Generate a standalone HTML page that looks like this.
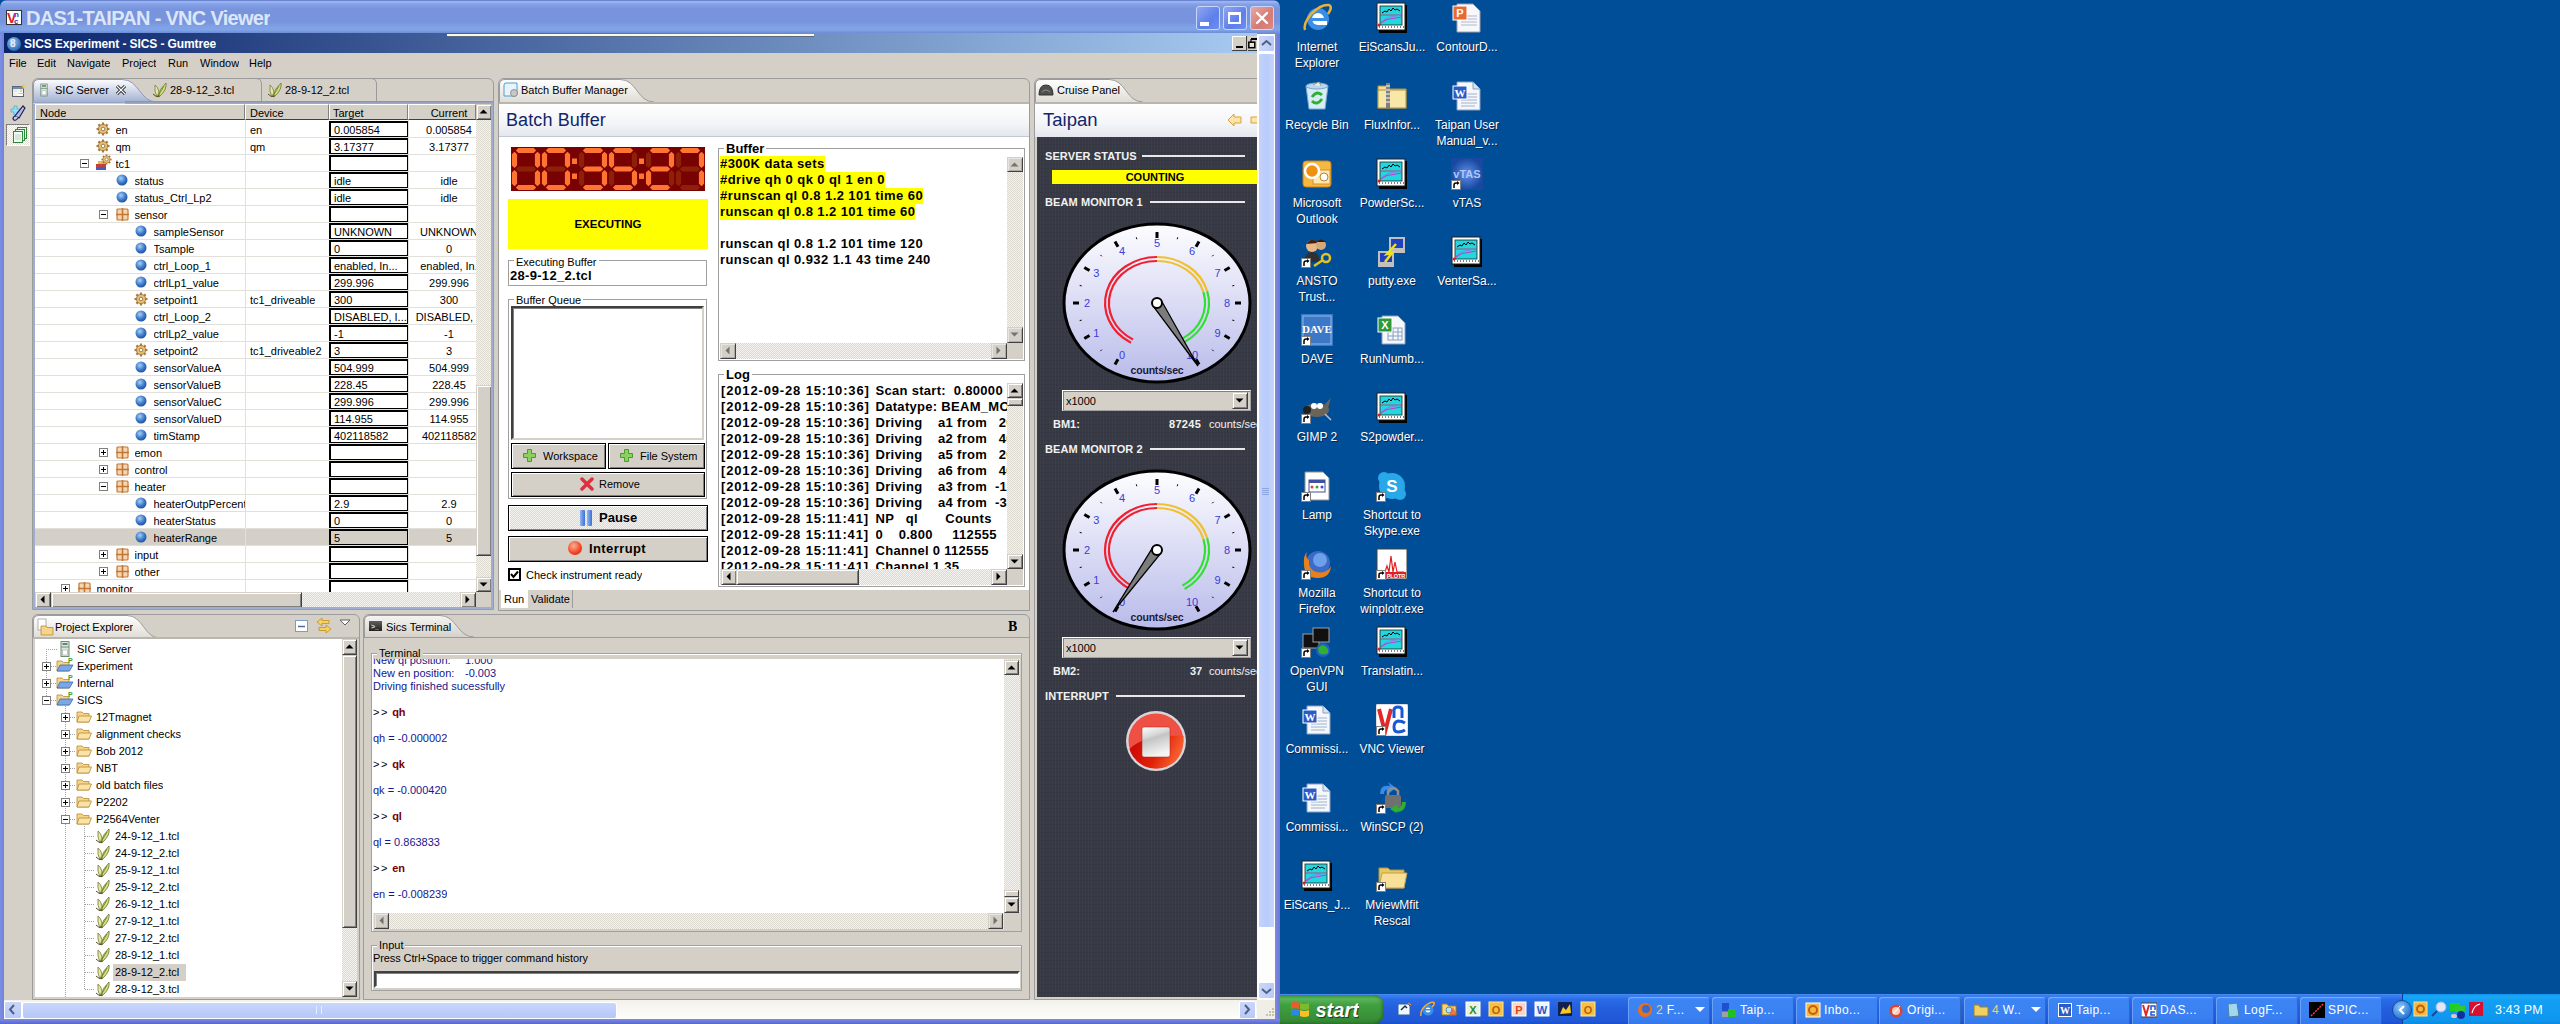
<!DOCTYPE html><html><head><meta charset="utf-8"><style>
html,body{margin:0;padding:0;width:2560px;height:1024px;overflow:hidden;background:#004E98;font-family:"Liberation Sans",sans-serif;}
div{position:absolute;box-sizing:border-box;white-space:nowrap;overflow:hidden;}
svg{position:absolute;overflow:hidden}
</style></head><body>
<div style="left:0px;top:0px;width:1280px;height:34px;background:linear-gradient(#6A86D0 0px,#6A86D0 1px,#9AB4F4 1px,#9AB4F4 2px,#86A2E6 4px,#7894DC 9px,#7894DC 22px,#80A2E6 27px,#80A4E8 30px,#6E8CD8 33px);border-radius:7px 7px 0 0;"></div>
<div style="left:0px;top:34px;width:4px;height:990px;background:linear-gradient(90deg,#7C8FE3,#6F83DA);"></div>
<div style="left:1275px;top:34px;width:5px;height:990px;background:linear-gradient(90deg,#7F8AE2,#6A79D6);"></div>
<div style="left:0px;top:1019px;width:1280px;height:5px;background:linear-gradient(#7E8BE6,#5567CF);"></div>
<div style="left:6px;top:10px;width:16px;height:15px;background:#fff;border:1px solid #333;"></div>
<div style="left:7px;top:10.5px;height:15px;line-height:15px;font-size:14px;font-weight:bold;color:#E02020;letter-spacing:-1px;">V</div>
<div style="left:14px;top:9.5px;height:9px;line-height:9px;font-size:8px;font-weight:bold;color:#2040C0;">n</div>
<div style="left:14px;top:16.5px;height:9px;line-height:9px;font-size:8px;font-weight:bold;color:#2040C0;">c</div>
<div style="left:26px;top:5.0px;height:26px;line-height:26px;font-size:20px;font-weight:bold;color:#DCE6FA;letter-spacing:-0.7px;">DAS1-TAIPAN - VNC Viewer</div>
<div style="left:1196px;top:6px;width:24px;height:24px;background:linear-gradient(135deg,#8FA6F2,#5C7FEA 60%,#6E8EF0);border:1px solid #C9D6FA;border-radius:3px;"></div>
<div style="left:1223px;top:6px;width:24px;height:24px;background:linear-gradient(135deg,#8FA6F2,#5C7FEA 60%,#6E8EF0);border:1px solid #C9D6FA;border-radius:3px;"></div>
<div style="left:1250px;top:6px;width:24px;height:24px;background:linear-gradient(135deg,#E9A7A0,#D57A74 60%,#DC8A82);border:1px solid #C9D6FA;border-radius:3px;"></div>
<div style="left:1200px;top:22px;width:9px;height:4px;background:#fff;"></div>
<div style="left:1228px;top:12px;width:13px;height:12px;border:2px solid #fff;border-top-width:3px;"></div>
<svg style="position:absolute;left:1254px;top:10px;" width="16" height="16" viewBox="0 0 16 16"><path d="M3 3L13 13M13 3L3 13" stroke="#fff" stroke-width="2.4" stroke-linecap="round"/></svg>
<div style="left:4px;top:33px;width:1253px;height:20px;background:linear-gradient(90deg,#0A246A 0%,#A6CAF0 100%);"></div>
<div style="left:447px;top:34px;width:367px;height:3px;background:#FAF8E8;border-bottom:1px solid #5A6A80;"></div>
<div style="left:7px;top:37px;width:14px;height:14px;background:radial-gradient(circle at 40% 35%,#9FC4EC,#2D6CB5 70%,#1D4E8C);border-radius:50%;"></div>
<div style="left:10px;top:38.0px;height:12px;line-height:12px;font-size:10px;font-weight:bold;color:#E8F0FF;">8</div>
<div style="left:24px;top:36.5px;height:15px;line-height:15px;font-size:12px;font-weight:bold;color:#fff;letter-spacing:-0.1px;">SICS Experiment - SICS - Gumtree</div>
<div style="left:1232px;top:36px;width:15px;height:15px;background:#D4D0C8;border-right:1px solid #404040;border-bottom:1px solid #404040;box-shadow:inset 1px 1px #fff;"></div>
<div style="left:1236px;top:46px;width:7px;height:2px;background:#000;"></div>
<div style="left:1248px;top:36px;width:9px;height:15px;background:#D4D0C8;border-bottom:1px solid #404040;"></div>
<svg style="position:absolute;left:1248px;top:38px;" width="9" height="12" viewBox="0 0 9 12"><path d="M3 0.5H9M3 1.5H9M3 1V4" stroke="#000" stroke-width="1.2" fill="none"/><rect x="0.8" y="4.2" width="6" height="5.5" fill="#E8E4D8" stroke="#000" stroke-width="1.5"/></svg>
<div style="left:4px;top:53px;width:1253px;height:966px;background:#D4D0C8;"></div>
<div style="left:9px;top:56.0px;height:14px;line-height:14px;font-size:11px;font-weight:normal;color:#000;">File</div>
<div style="left:37px;top:56.0px;height:14px;line-height:14px;font-size:11px;font-weight:normal;color:#000;">Edit</div>
<div style="left:67px;top:56.0px;height:14px;line-height:14px;font-size:11px;font-weight:normal;color:#000;">Navigate</div>
<div style="left:122px;top:56.0px;height:14px;line-height:14px;font-size:11px;font-weight:normal;color:#000;">Project</div>
<div style="left:168px;top:56.0px;height:14px;line-height:14px;font-size:11px;font-weight:normal;color:#000;">Run</div>
<div style="left:200px;top:56.0px;height:14px;line-height:14px;font-size:11px;font-weight:normal;color:#000;">Window</div>
<div style="left:249px;top:56.0px;height:14px;line-height:14px;font-size:11px;font-weight:normal;color:#000;">Help</div>
<svg style="position:absolute;left:11px;top:83px;" width="16" height="16" viewBox="0 0 16 16"><rect x="1.5" y="3.5" width="11" height="10" fill="#fff" stroke="#5A6470"/><rect x="2" y="4" width="10" height="2" fill="#7C8CA8"/><rect x="2" y="6" width="4.5" height="3.5" fill="#D8ECF8"/><rect x="7" y="6" width="5" height="3.5" fill="#E8F4FC"/><rect x="2" y="10" width="4.5" height="3" fill="#FCF0C8"/><rect x="7" y="10" width="5" height="3" fill="#fff"/><path d="M10 6V9M7.5 10.5H12.5M12.5 0.5V5.5M10 3H15" stroke="#F0D020" stroke-width="1.2"/></svg>
<svg style="position:absolute;left:9px;top:104px;" width="18" height="18" viewBox="0 0 18 18"><path d="M2 5H5V2H8V5H11V8H8V11H5V8H2Z" fill="#90E0F0" stroke="#40A0C8" stroke-width="0.6"/><path d="M16 4 L10 14 L6 12 L14 2Z" fill="#B8B8F0" stroke="#202050" stroke-width="1.2"/><path d="M9 14 Q6 18 4 15 Q4 12 7 12" fill="#C8C8F8" stroke="#202050" stroke-width="1.2"/></svg>
<div style="left:6px;top:124px;width:24px;height:22px;background:repeating-conic-gradient(#FFFFFF 0% 25%, #E4E1DA 0% 50%) 0 0/2px 2px;border:1px solid;border-color:#808080 #fff #fff #808080;"></div>
<svg style="position:absolute;left:12px;top:127px;" width="15" height="17" viewBox="0 0 15 17"><rect x="5.5" y="0.5" width="9" height="11" fill="#E8F8E8" stroke="#2E8A3A"/><rect x="3.5" y="2.5" width="9" height="11" fill="#EAF8EA" stroke="#2E8A3A"/><rect x="1.5" y="4.5" width="9" height="11" fill="#F2FCF2" stroke="#2E8A3A"/><path d="M3 8H9M3 10H9M3 12H9" stroke="#90B8A0" stroke-width="0.6"/></svg>
<svg width="0" height="0" style="position:absolute"><defs>
<symbol id="gear" viewBox="0 0 14 14"><g fill="#D9A860" stroke="#8C6A3A" stroke-width="0.8"><circle cx="7" cy="7" r="4.6"/></g><g stroke="#A87C40" stroke-width="2.2"><line x1="7" y1="0.5" x2="7" y2="13.5"/><line x1="0.5" y1="7" x2="13.5" y2="7"/><line x1="2.4" y1="2.4" x2="11.6" y2="11.6"/><line x1="11.6" y1="2.4" x2="2.4" y2="11.6"/></g><circle cx="7" cy="7" r="4" fill="#E8C070"/><circle cx="7" cy="7" r="1.8" fill="#fff" stroke="#8C6A3A" stroke-width="0.8"/></symbol>
<symbol id="ball" viewBox="0 0 12 12"><defs><radialGradient id="bg1" cx="0.4" cy="0.35" r="0.7"><stop offset="0" stop-color="#A8CFF5"/><stop offset="0.6" stop-color="#3A78C8"/><stop offset="1" stop-color="#1E4C96"/></radialGradient></defs><circle cx="6" cy="6" r="5.5" fill="url(#bg1)"/></symbol>
<symbol id="grid" viewBox="0 0 13 13"><rect x="1" y="1" width="11" height="11" rx="1" fill="#F6D6B0" stroke="#C07838" stroke-width="1.2"/><path d="M6.5 0V13M0 6.5H13" stroke="#C07838" stroke-width="1.6"/></symbol>
<symbol id="plus" viewBox="0 0 9 9"><rect x="0.5" y="0.5" width="8" height="8" fill="#fff" stroke="#808080"/><path d="M2 4.5H7M4.5 2V7" stroke="#000"/></symbol>
<symbol id="minus" viewBox="0 0 9 9"><rect x="0.5" y="0.5" width="8" height="8" fill="#fff" stroke="#808080"/><path d="M2 4.5H7" stroke="#000"/></symbol>
<symbol id="tcl" viewBox="0 0 16 16"><path d="M5 15 Q2 9 3 3 Q6 5 7 10Z" fill="#E8E8A0" stroke="#7A7A40" stroke-width="0.8"/><path d="M6 15 Q7 7 14 1 Q15 7 9 13Z" fill="#D8E080" stroke="#6A7030" stroke-width="0.8"/><path d="M6 14 L12 4" stroke="#6A8C30" stroke-width="1"/><path d="M1 12 Q4 16 8 14" stroke="#505020" stroke-width="1" fill="none"/></symbol>
<symbol id="folder" viewBox="0 0 16 14"><path d="M1 2 H6 L7.5 3.5 H13 V12 H1Z" fill="#F5D58A" stroke="#B88A30" stroke-width="0.8"/><path d="M1 12 L3 6 H15.5 L13 12Z" fill="#FBE3A8" stroke="#B88A30" stroke-width="0.8"/></symbol>
<symbol id="pfolder" viewBox="0 0 18 16"><path d="M1 4 H6 L7.5 5.5 H13 V14 H1Z" fill="#F5D58A" stroke="#B88A30" stroke-width="0.8"/><path d="M1 14 L4 8 H17 L13.5 14Z" fill="#7BA7E6" stroke="#3A6AB0" stroke-width="0.8"/><text x="12" y="6" font-size="7" font-weight="bold" fill="#3AA030" font-family="Liberation Sans">P</text></symbol>
<symbol id="server" viewBox="0 0 10 16"><rect x="1" y="0.5" width="8" height="15" fill="#DDE6DD" stroke="#6C8C7C"/><rect x="2.5" y="2" width="5" height="2" fill="#5C8C6C"/><line x1="1" y1="6" x2="9" y2="6" stroke="#6C8C7C"/><rect x="2.5" y="9" width="5" height="5" fill="#fff" stroke="#9CA8A0" stroke-width="0.6"/></symbol>
<symbol id="sarrowU" viewBox="0 0 15 15"><path d="M3.5 9.5 L7.5 5.5 L11.5 9.5Z" fill="#000"/></symbol>
<symbol id="sarrowD" viewBox="0 0 15 15"><path d="M3.5 5.5 L7.5 9.5 L11.5 5.5Z" fill="#000"/></symbol>
<symbol id="sarrowL" viewBox="0 0 15 15"><path d="M9.5 3.5 L5.5 7.5 L9.5 11.5Z" fill="#000"/></symbol>
<symbol id="sarrowR" viewBox="0 0 15 15"><path d="M5.5 3.5 L9.5 7.5 L5.5 11.5Z" fill="#000"/></symbol>
</defs></svg>
<div style="left:32px;top:78px;width:462px;height:532px;border:1px solid #9C9C9C;border-radius:6px 6px 0 0;background:#D4D0C8;"></div>
<svg style="position:absolute;left:33px;top:79px" width="126" height="24"><defs><linearGradient id="atab" x1="0" y1="0" x2="0" y2="1"><stop offset="0" stop-color="#FDFDFE"/><stop offset="1" stop-color="#9EAED0"/></linearGradient></defs><path d="M0.5 24 V6 Q0.5 0.5 6 0.5 H89 C106.5 0.5 106.5 23 124 23 V24Z" fill="url(#atab)" stroke="#8E99B8" stroke-width="1"/></svg>
<svg style="position:absolute;left:40px;top:82px" width="8" height="16"><use href="#server" width="8" height="16"/></svg>
<div style="left:55px;top:83.0px;height:14px;line-height:14px;font-size:11px;font-weight:normal;color:#000;">SIC Server</div>
<svg style="position:absolute;left:115px;top:84px;" width="12" height="12" viewBox="0 0 12 12"><path d="M2 2L10 10M10 2L2 10" stroke="#000" stroke-width="3"/><path d="M2 2L10 10M10 2L2 10" stroke="#fff" stroke-width="1.4"/></svg>
<svg style="position:absolute;left:152px;top:82px" width="16" height="16"><use href="#tcl" width="16" height="16"/></svg>
<div style="left:170px;top:83.0px;height:14px;line-height:14px;font-size:11px;font-weight:normal;color:#000;">28-9-12_3.tcl</div>
<svg style="position:absolute;left:250px;top:78px;" width="13" height="24" viewBox="0 0 13 24"><path d="M0 0.5 H6 Q11.5 0.5 11.5 6 V24" stroke="#9A9A9A" fill="none"/></svg>
<svg style="position:absolute;left:267px;top:82px" width="16" height="16"><use href="#tcl" width="16" height="16"/></svg>
<div style="left:285px;top:83.0px;height:14px;line-height:14px;font-size:11px;font-weight:normal;color:#000;">28-9-12_2.tcl</div>
<svg style="position:absolute;left:365px;top:78px;" width="13" height="24" viewBox="0 0 13 24"><path d="M0 0.5 H6 Q11.5 0.5 11.5 6 V24" stroke="#9A9A9A" fill="none"/></svg>
<div style="left:125px;top:101px;width:368px;height:3px;background:linear-gradient(#8890A8,#A4B0CC);"></div>
<div style="left:35px;top:120px;width:441px;height:472px;background:#fff;"></div>
<div style="left:35px;top:104px;width:210px;height:16px;background:#D4D0C8;border:1px solid;border-color:#fff #808080 #404040 #fff;"></div>
<div style="left:245px;top:104px;width:84px;height:16px;background:#D4D0C8;border:1px solid;border-color:#fff #808080 #404040 #fff;"></div>
<div style="left:329px;top:104px;width:79px;height:16px;background:#D4D0C8;border:1px solid;border-color:#fff #808080 #404040 #fff;"></div>
<div style="left:408px;top:104px;width:68px;height:16px;background:#D4D0C8;border:1px solid;border-color:#fff #808080 #404040 #fff;"></div>
<div style="left:40px;top:106.0px;height:14px;line-height:14px;font-size:11px;font-weight:normal;color:#000;">Node</div>
<div style="left:250px;top:106.0px;height:14px;line-height:14px;font-size:11px;font-weight:normal;color:#000;">Device</div>
<div style="left:333px;top:106.0px;height:14px;line-height:14px;font-size:11px;font-weight:normal;color:#000;">Target</div>
<div style="left:409.0px;top:106.0px;width:80px;height:14px;line-height:14px;font-size:11px;font-weight:normal;color:#000;text-align:center;">Current</div>
<div style="left:35px;top:120px;width:441px;height:472px;">
<div style="left:0px;top:17px;width:441px;height:1px;background:#E2E0DA;"></div>
<svg style="position:absolute;left:61px;top:2px" width="14" height="14"><use href="#gear" width="14" height="14"/></svg>
<div style="left:80.5px;top:2px;width:129.5px;height:16px;line-height:16px;font-size:11px;">en</div>
<div style="left:215px;top:2px;height:16px;line-height:16px;font-size:11px;">en</div>
<div style="left:294px;top:1px;width:79px;height:16px;border:2px solid #000;border-right-width:1px;border-bottom-width:1px;background:#fff;line-height:13px;font-size:11px;padding-left:3px;padding-top:1px;">0.005854</div>
<div style="left:373px;top:2px;width:82px;height:16px;line-height:16px;font-size:11px;text-align:center;">0.005854</div>
<div style="left:0px;top:34px;width:441px;height:1px;background:#E2E0DA;"></div>
<svg style="position:absolute;left:61px;top:19px" width="14" height="14"><use href="#gear" width="14" height="14"/></svg>
<div style="left:80.5px;top:19px;width:129.5px;height:16px;line-height:16px;font-size:11px;">qm</div>
<div style="left:215px;top:19px;height:16px;line-height:16px;font-size:11px;">qm</div>
<div style="left:294px;top:18px;width:79px;height:16px;border:2px solid #000;border-right-width:1px;border-bottom-width:1px;background:#fff;line-height:13px;font-size:11px;padding-left:3px;padding-top:1px;">3.17377</div>
<div style="left:373px;top:19px;width:82px;height:16px;line-height:16px;font-size:11px;text-align:center;">3.17377</div>
<div style="left:0px;top:51px;width:441px;height:1px;background:#E2E0DA;"></div>
<svg style="position:absolute;left:45.0px;top:38.5px" width="9" height="9"><use href="#minus" width="9" height="9"/></svg>
<svg style="position:absolute;left:60px;top:35px;" width="16" height="16" viewBox="0 0 16 16"><rect x="1" y="9" width="10" height="3" fill="#C04040"/><rect x="1" y="12" width="10" height="3" fill="#4060C0"/><rect x="3" y="6" width="8" height="3" fill="#E0C040"/></svg>
<svg style="position:absolute;left:66px;top:34px" width="11" height="11"><use href="#gear" width="11" height="11"/></svg>
<div style="left:80.5px;top:36px;width:129.5px;height:16px;line-height:16px;font-size:11px;">tc1</div>
<div style="left:294px;top:35px;width:79px;height:16px;border:2px solid #000;border-right-width:1px;border-bottom-width:1px;background:#fff;line-height:13px;font-size:11px;padding-left:3px;padding-top:1px;"></div>
<div style="left:0px;top:68px;width:441px;height:1px;background:#E2E0DA;"></div>
<svg style="position:absolute;left:81px;top:54px" width="12" height="12"><use href="#ball" width="12" height="12"/></svg>
<div style="left:99.5px;top:53px;width:110.5px;height:16px;line-height:16px;font-size:11px;">status</div>
<div style="left:294px;top:52px;width:79px;height:16px;border:2px solid #000;border-right-width:1px;border-bottom-width:1px;background:#fff;line-height:13px;font-size:11px;padding-left:3px;padding-top:1px;">idle</div>
<div style="left:373px;top:53px;width:82px;height:16px;line-height:16px;font-size:11px;text-align:center;">idle</div>
<div style="left:0px;top:85px;width:441px;height:1px;background:#E2E0DA;"></div>
<svg style="position:absolute;left:81px;top:71px" width="12" height="12"><use href="#ball" width="12" height="12"/></svg>
<div style="left:99.5px;top:70px;width:110.5px;height:16px;line-height:16px;font-size:11px;">status_Ctrl_Lp2</div>
<div style="left:294px;top:69px;width:79px;height:16px;border:2px solid #000;border-right-width:1px;border-bottom-width:1px;background:#fff;line-height:13px;font-size:11px;padding-left:3px;padding-top:1px;">idle</div>
<div style="left:373px;top:70px;width:82px;height:16px;line-height:16px;font-size:11px;text-align:center;">idle</div>
<div style="left:0px;top:102px;width:441px;height:1px;background:#E2E0DA;"></div>
<svg style="position:absolute;left:64.0px;top:89.5px" width="9" height="9"><use href="#minus" width="9" height="9"/></svg>
<svg style="position:absolute;left:81px;top:87.5px" width="13" height="13"><use href="#grid" width="13" height="13"/></svg>
<div style="left:99.5px;top:87px;width:110.5px;height:16px;line-height:16px;font-size:11px;">sensor</div>
<div style="left:294px;top:86px;width:79px;height:16px;border:2px solid #000;border-right-width:1px;border-bottom-width:1px;background:#fff;line-height:13px;font-size:11px;padding-left:3px;padding-top:1px;"></div>
<div style="left:0px;top:119px;width:441px;height:1px;background:#E2E0DA;"></div>
<svg style="position:absolute;left:100px;top:105px" width="12" height="12"><use href="#ball" width="12" height="12"/></svg>
<div style="left:118.5px;top:104px;width:91.5px;height:16px;line-height:16px;font-size:11px;">sampleSensor</div>
<div style="left:294px;top:103px;width:79px;height:16px;border:2px solid #000;border-right-width:1px;border-bottom-width:1px;background:#fff;line-height:13px;font-size:11px;padding-left:3px;padding-top:1px;">UNKNOWN</div>
<div style="left:373px;top:104px;width:82px;height:16px;line-height:16px;font-size:11px;text-align:center;">UNKNOWN</div>
<div style="left:0px;top:136px;width:441px;height:1px;background:#E2E0DA;"></div>
<svg style="position:absolute;left:100px;top:122px" width="12" height="12"><use href="#ball" width="12" height="12"/></svg>
<div style="left:118.5px;top:121px;width:91.5px;height:16px;line-height:16px;font-size:11px;">Tsample</div>
<div style="left:294px;top:120px;width:79px;height:16px;border:2px solid #000;border-right-width:1px;border-bottom-width:1px;background:#fff;line-height:13px;font-size:11px;padding-left:3px;padding-top:1px;">0</div>
<div style="left:373px;top:121px;width:82px;height:16px;line-height:16px;font-size:11px;text-align:center;">0</div>
<div style="left:0px;top:153px;width:441px;height:1px;background:#E2E0DA;"></div>
<svg style="position:absolute;left:100px;top:139px" width="12" height="12"><use href="#ball" width="12" height="12"/></svg>
<div style="left:118.5px;top:138px;width:91.5px;height:16px;line-height:16px;font-size:11px;">ctrl_Loop_1</div>
<div style="left:294px;top:137px;width:79px;height:16px;border:2px solid #000;border-right-width:1px;border-bottom-width:1px;background:#fff;line-height:13px;font-size:11px;padding-left:3px;padding-top:1px;">enabled, In...</div>
<div style="left:373px;top:138px;width:82px;height:16px;line-height:16px;font-size:11px;text-align:center;">enabled, In.</div>
<div style="left:0px;top:170px;width:441px;height:1px;background:#E2E0DA;"></div>
<svg style="position:absolute;left:100px;top:156px" width="12" height="12"><use href="#ball" width="12" height="12"/></svg>
<div style="left:118.5px;top:155px;width:91.5px;height:16px;line-height:16px;font-size:11px;">ctrlLp1_value</div>
<div style="left:294px;top:154px;width:79px;height:16px;border:2px solid #000;border-right-width:1px;border-bottom-width:1px;background:#fff;line-height:13px;font-size:11px;padding-left:3px;padding-top:1px;">299.996</div>
<div style="left:373px;top:155px;width:82px;height:16px;line-height:16px;font-size:11px;text-align:center;">299.996</div>
<div style="left:0px;top:187px;width:441px;height:1px;background:#E2E0DA;"></div>
<svg style="position:absolute;left:99px;top:172px" width="14" height="14"><use href="#gear" width="14" height="14"/></svg>
<div style="left:118.5px;top:172px;width:91.5px;height:16px;line-height:16px;font-size:11px;">setpoint1</div>
<div style="left:215px;top:172px;height:16px;line-height:16px;font-size:11px;">tc1_driveable</div>
<div style="left:294px;top:171px;width:79px;height:16px;border:2px solid #000;border-right-width:1px;border-bottom-width:1px;background:#fff;line-height:13px;font-size:11px;padding-left:3px;padding-top:1px;">300</div>
<div style="left:373px;top:172px;width:82px;height:16px;line-height:16px;font-size:11px;text-align:center;">300</div>
<div style="left:0px;top:204px;width:441px;height:1px;background:#E2E0DA;"></div>
<svg style="position:absolute;left:100px;top:190px" width="12" height="12"><use href="#ball" width="12" height="12"/></svg>
<div style="left:118.5px;top:189px;width:91.5px;height:16px;line-height:16px;font-size:11px;">ctrl_Loop_2</div>
<div style="left:294px;top:188px;width:79px;height:16px;border:2px solid #000;border-right-width:1px;border-bottom-width:1px;background:#fff;line-height:13px;font-size:11px;padding-left:3px;padding-top:1px;">DISABLED, I...</div>
<div style="left:373px;top:189px;width:82px;height:16px;line-height:16px;font-size:11px;text-align:center;">DISABLED, I.</div>
<div style="left:0px;top:221px;width:441px;height:1px;background:#E2E0DA;"></div>
<svg style="position:absolute;left:100px;top:207px" width="12" height="12"><use href="#ball" width="12" height="12"/></svg>
<div style="left:118.5px;top:206px;width:91.5px;height:16px;line-height:16px;font-size:11px;">ctrlLp2_value</div>
<div style="left:294px;top:205px;width:79px;height:16px;border:2px solid #000;border-right-width:1px;border-bottom-width:1px;background:#fff;line-height:13px;font-size:11px;padding-left:3px;padding-top:1px;">-1</div>
<div style="left:373px;top:206px;width:82px;height:16px;line-height:16px;font-size:11px;text-align:center;">-1</div>
<div style="left:0px;top:238px;width:441px;height:1px;background:#E2E0DA;"></div>
<svg style="position:absolute;left:99px;top:223px" width="14" height="14"><use href="#gear" width="14" height="14"/></svg>
<div style="left:118.5px;top:223px;width:91.5px;height:16px;line-height:16px;font-size:11px;">setpoint2</div>
<div style="left:215px;top:223px;height:16px;line-height:16px;font-size:11px;">tc1_driveable2</div>
<div style="left:294px;top:222px;width:79px;height:16px;border:2px solid #000;border-right-width:1px;border-bottom-width:1px;background:#fff;line-height:13px;font-size:11px;padding-left:3px;padding-top:1px;">3</div>
<div style="left:373px;top:223px;width:82px;height:16px;line-height:16px;font-size:11px;text-align:center;">3</div>
<div style="left:0px;top:255px;width:441px;height:1px;background:#E2E0DA;"></div>
<svg style="position:absolute;left:100px;top:241px" width="12" height="12"><use href="#ball" width="12" height="12"/></svg>
<div style="left:118.5px;top:240px;width:91.5px;height:16px;line-height:16px;font-size:11px;">sensorValueA</div>
<div style="left:294px;top:239px;width:79px;height:16px;border:2px solid #000;border-right-width:1px;border-bottom-width:1px;background:#fff;line-height:13px;font-size:11px;padding-left:3px;padding-top:1px;">504.999</div>
<div style="left:373px;top:240px;width:82px;height:16px;line-height:16px;font-size:11px;text-align:center;">504.999</div>
<div style="left:0px;top:272px;width:441px;height:1px;background:#E2E0DA;"></div>
<svg style="position:absolute;left:100px;top:258px" width="12" height="12"><use href="#ball" width="12" height="12"/></svg>
<div style="left:118.5px;top:257px;width:91.5px;height:16px;line-height:16px;font-size:11px;">sensorValueB</div>
<div style="left:294px;top:256px;width:79px;height:16px;border:2px solid #000;border-right-width:1px;border-bottom-width:1px;background:#fff;line-height:13px;font-size:11px;padding-left:3px;padding-top:1px;">228.45</div>
<div style="left:373px;top:257px;width:82px;height:16px;line-height:16px;font-size:11px;text-align:center;">228.45</div>
<div style="left:0px;top:289px;width:441px;height:1px;background:#E2E0DA;"></div>
<svg style="position:absolute;left:100px;top:275px" width="12" height="12"><use href="#ball" width="12" height="12"/></svg>
<div style="left:118.5px;top:274px;width:91.5px;height:16px;line-height:16px;font-size:11px;">sensorValueC</div>
<div style="left:294px;top:273px;width:79px;height:16px;border:2px solid #000;border-right-width:1px;border-bottom-width:1px;background:#fff;line-height:13px;font-size:11px;padding-left:3px;padding-top:1px;">299.996</div>
<div style="left:373px;top:274px;width:82px;height:16px;line-height:16px;font-size:11px;text-align:center;">299.996</div>
<div style="left:0px;top:306px;width:441px;height:1px;background:#E2E0DA;"></div>
<svg style="position:absolute;left:100px;top:292px" width="12" height="12"><use href="#ball" width="12" height="12"/></svg>
<div style="left:118.5px;top:291px;width:91.5px;height:16px;line-height:16px;font-size:11px;">sensorValueD</div>
<div style="left:294px;top:290px;width:79px;height:16px;border:2px solid #000;border-right-width:1px;border-bottom-width:1px;background:#fff;line-height:13px;font-size:11px;padding-left:3px;padding-top:1px;">114.955</div>
<div style="left:373px;top:291px;width:82px;height:16px;line-height:16px;font-size:11px;text-align:center;">114.955</div>
<div style="left:0px;top:323px;width:441px;height:1px;background:#E2E0DA;"></div>
<svg style="position:absolute;left:100px;top:309px" width="12" height="12"><use href="#ball" width="12" height="12"/></svg>
<div style="left:118.5px;top:308px;width:91.5px;height:16px;line-height:16px;font-size:11px;">timStamp</div>
<div style="left:294px;top:307px;width:79px;height:16px;border:2px solid #000;border-right-width:1px;border-bottom-width:1px;background:#fff;line-height:13px;font-size:11px;padding-left:3px;padding-top:1px;">402118582</div>
<div style="left:373px;top:308px;width:82px;height:16px;line-height:16px;font-size:11px;text-align:center;">402118582</div>
<div style="left:0px;top:340px;width:441px;height:1px;background:#E2E0DA;"></div>
<svg style="position:absolute;left:64.0px;top:327.5px" width="9" height="9"><use href="#plus" width="9" height="9"/></svg>
<svg style="position:absolute;left:81px;top:325.5px" width="13" height="13"><use href="#grid" width="13" height="13"/></svg>
<div style="left:99.5px;top:325px;width:110.5px;height:16px;line-height:16px;font-size:11px;">emon</div>
<div style="left:294px;top:324px;width:79px;height:16px;border:2px solid #000;border-right-width:1px;border-bottom-width:1px;background:#fff;line-height:13px;font-size:11px;padding-left:3px;padding-top:1px;"></div>
<div style="left:0px;top:357px;width:441px;height:1px;background:#E2E0DA;"></div>
<svg style="position:absolute;left:64.0px;top:344.5px" width="9" height="9"><use href="#plus" width="9" height="9"/></svg>
<svg style="position:absolute;left:81px;top:342.5px" width="13" height="13"><use href="#grid" width="13" height="13"/></svg>
<div style="left:99.5px;top:342px;width:110.5px;height:16px;line-height:16px;font-size:11px;">control</div>
<div style="left:294px;top:341px;width:79px;height:16px;border:2px solid #000;border-right-width:1px;border-bottom-width:1px;background:#fff;line-height:13px;font-size:11px;padding-left:3px;padding-top:1px;"></div>
<div style="left:0px;top:374px;width:441px;height:1px;background:#E2E0DA;"></div>
<svg style="position:absolute;left:64.0px;top:361.5px" width="9" height="9"><use href="#minus" width="9" height="9"/></svg>
<svg style="position:absolute;left:81px;top:359.5px" width="13" height="13"><use href="#grid" width="13" height="13"/></svg>
<div style="left:99.5px;top:359px;width:110.5px;height:16px;line-height:16px;font-size:11px;">heater</div>
<div style="left:294px;top:358px;width:79px;height:16px;border:2px solid #000;border-right-width:1px;border-bottom-width:1px;background:#fff;line-height:13px;font-size:11px;padding-left:3px;padding-top:1px;"></div>
<div style="left:0px;top:391px;width:441px;height:1px;background:#E2E0DA;"></div>
<svg style="position:absolute;left:100px;top:377px" width="12" height="12"><use href="#ball" width="12" height="12"/></svg>
<div style="left:118.5px;top:376px;width:91.5px;height:16px;line-height:16px;font-size:11px;">heaterOutpPercent</div>
<div style="left:294px;top:375px;width:79px;height:16px;border:2px solid #000;border-right-width:1px;border-bottom-width:1px;background:#fff;line-height:13px;font-size:11px;padding-left:3px;padding-top:1px;">2.9</div>
<div style="left:373px;top:376px;width:82px;height:16px;line-height:16px;font-size:11px;text-align:center;">2.9</div>
<div style="left:0px;top:408px;width:441px;height:1px;background:#E2E0DA;"></div>
<svg style="position:absolute;left:100px;top:394px" width="12" height="12"><use href="#ball" width="12" height="12"/></svg>
<div style="left:118.5px;top:393px;width:91.5px;height:16px;line-height:16px;font-size:11px;">heaterStatus</div>
<div style="left:294px;top:392px;width:79px;height:16px;border:2px solid #000;border-right-width:1px;border-bottom-width:1px;background:#fff;line-height:13px;font-size:11px;padding-left:3px;padding-top:1px;">0</div>
<div style="left:373px;top:393px;width:82px;height:16px;line-height:16px;font-size:11px;text-align:center;">0</div>
<div style="left:0px;top:409px;width:441px;height:17px;background:#D4D0C8;"></div>
<div style="left:0px;top:425px;width:441px;height:1px;background:#E2E0DA;"></div>
<svg style="position:absolute;left:100px;top:411px" width="12" height="12"><use href="#ball" width="12" height="12"/></svg>
<div style="left:118.5px;top:410px;width:91.5px;height:16px;line-height:16px;font-size:11px;">heaterRange</div>
<div style="left:294px;top:409px;width:79px;height:16px;border:2px solid #000;border-right-width:1px;border-bottom-width:1px;background:#D4D0C8;line-height:13px;font-size:11px;padding-left:3px;padding-top:1px;">5</div>
<div style="left:373px;top:410px;width:82px;height:16px;line-height:16px;font-size:11px;text-align:center;">5</div>
<div style="left:0px;top:442px;width:441px;height:1px;background:#E2E0DA;"></div>
<svg style="position:absolute;left:64.0px;top:429.5px" width="9" height="9"><use href="#plus" width="9" height="9"/></svg>
<svg style="position:absolute;left:81px;top:427.5px" width="13" height="13"><use href="#grid" width="13" height="13"/></svg>
<div style="left:99.5px;top:427px;width:110.5px;height:16px;line-height:16px;font-size:11px;">input</div>
<div style="left:294px;top:426px;width:79px;height:16px;border:2px solid #000;border-right-width:1px;border-bottom-width:1px;background:#fff;line-height:13px;font-size:11px;padding-left:3px;padding-top:1px;"></div>
<div style="left:0px;top:459px;width:441px;height:1px;background:#E2E0DA;"></div>
<svg style="position:absolute;left:64.0px;top:446.5px" width="9" height="9"><use href="#plus" width="9" height="9"/></svg>
<svg style="position:absolute;left:81px;top:444.5px" width="13" height="13"><use href="#grid" width="13" height="13"/></svg>
<div style="left:99.5px;top:444px;width:110.5px;height:16px;line-height:16px;font-size:11px;">other</div>
<div style="left:294px;top:443px;width:79px;height:16px;border:2px solid #000;border-right-width:1px;border-bottom-width:1px;background:#fff;line-height:13px;font-size:11px;padding-left:3px;padding-top:1px;"></div>
<div style="left:0px;top:476px;width:441px;height:1px;background:#E2E0DA;"></div>
<svg style="position:absolute;left:26.0px;top:463.5px" width="9" height="9"><use href="#plus" width="9" height="9"/></svg>
<svg style="position:absolute;left:43px;top:461.5px" width="13" height="13"><use href="#grid" width="13" height="13"/></svg>
<div style="left:61.5px;top:461px;width:148.5px;height:16px;line-height:16px;font-size:11px;">monitor</div>
<div style="left:294px;top:460px;width:79px;height:16px;border:2px solid #000;border-right-width:1px;border-bottom-width:1px;background:#fff;line-height:13px;font-size:11px;padding-left:3px;padding-top:1px;"></div>
</div>
<div style="left:245px;top:120px;width:1px;height:472px;background:#E2E0DA;"></div>
<div style="left:408px;top:120px;width:1px;height:472px;background:#E2E0DA;"></div>
<div style="left:476px;top:104px;width:16px;height:488px;background:repeating-conic-gradient(#F4F3EF 0% 25%, #DCD9D1 0% 50%) 0 0/2px 2px;"></div>
<div style="left:476px;top:104px;width:16px;height:16px;background:#D4D0C8;border:1px solid;border-color:#D4D0C8 #404040 #404040 #D4D0C8;box-shadow:inset 1px 1px #fff,inset -1px -1px #808080;"></div>
<svg style="position:absolute;left:476px;top:104px" width="15" height="15"><use href="#sarrowU" width="15" height="15"/></svg>
<div style="left:476px;top:385px;width:16px;height:171px;background:#D4D0C8;border:1px solid;border-color:#D4D0C8 #404040 #404040 #D4D0C8;box-shadow:inset 1px 1px #fff,inset -1px -1px #808080;"></div>
<div style="left:476px;top:577px;width:16px;height:15px;background:#D4D0C8;border:1px solid;border-color:#D4D0C8 #404040 #404040 #D4D0C8;box-shadow:inset 1px 1px #fff,inset -1px -1px #808080;"></div>
<svg style="position:absolute;left:476px;top:577px" width="15" height="15"><use href="#sarrowD" width="15" height="15"/></svg>
<div style="left:35px;top:592px;width:441px;height:16px;background:repeating-conic-gradient(#F4F3EF 0% 25%, #DCD9D1 0% 50%) 0 0/2px 2px;"></div>
<div style="left:35px;top:592px;width:16px;height:16px;background:#D4D0C8;border:1px solid;border-color:#D4D0C8 #404040 #404040 #D4D0C8;box-shadow:inset 1px 1px #fff,inset -1px -1px #808080;"></div>
<svg style="position:absolute;left:35px;top:592px" width="15" height="15"><use href="#sarrowL" width="15" height="15"/></svg>
<div style="left:51px;top:592px;width:251px;height:16px;background:#D4D0C8;border:1px solid;border-color:#D4D0C8 #404040 #404040 #D4D0C8;box-shadow:inset 1px 1px #fff,inset -1px -1px #808080;"></div>
<div style="left:460px;top:592px;width:16px;height:16px;background:#D4D0C8;border:1px solid;border-color:#D4D0C8 #404040 #404040 #D4D0C8;box-shadow:inset 1px 1px #fff,inset -1px -1px #808080;"></div>
<svg style="position:absolute;left:460px;top:592px" width="15" height="15"><use href="#sarrowR" width="15" height="15"/></svg>
<div style="left:476px;top:592px;width:16px;height:16px;background:#D4D0C8;"></div>
<div style="left:33px;top:607px;width:460px;height:2px;background:#9EAED0;"></div>
<div style="left:33px;top:104px;width:2px;height:504px;background:#9EAED0;"></div>
<div style="left:491px;top:104px;width:2px;height:504px;background:#9EAED0;"></div>
<div style="left:498px;top:78px;width:532px;height:533px;border:1px solid #9C9C9C;border-radius:6px 6px 0 0;background:#D4D0C8;"></div>
<svg style="position:absolute;left:499px;top:79px" width="157" height="24"><defs><linearGradient id="itab" x1="0" y1="0" x2="0" y2="1"><stop offset="0" stop-color="#FFFFFF"/><stop offset="1" stop-color="#DEDBD4"/></linearGradient></defs><path d="M0.5 24 V6 Q0.5 0.5 6 0.5 H121 C138.0 0.5 138.0 23 155 23 V24Z" fill="url(#itab)" stroke="#9C9C9C" stroke-width="1"/></svg>
<svg style="position:absolute;left:502px;top:82px;" width="18" height="16" viewBox="0 0 18 16"><path d="M2 3 Q2 1 4 1 H15 V12 Q15 14 13 14 H2Z" fill="#E8F4FB" stroke="#4AA0D0"/><circle cx="12" cy="11" r="3.5" fill="#C8C8C8" stroke="#808080" stroke-width="0.8"/></svg>
<div style="left:521px;top:83.0px;height:14px;line-height:14px;font-size:11px;font-weight:normal;color:#000;">Batch Buffer Manager</div>
<div style="left:499px;top:102px;width:530px;height:2px;background:#B8B6AE;"></div>
<div style="left:499px;top:104px;width:530px;height:33px;background:linear-gradient(#FFFFFF,#F4F5F8 60%,#E4E7EE);border-bottom:1px solid #C4C8D4;"></div>
<div style="left:506px;top:108.0px;height:24px;line-height:24px;font-size:18px;font-weight:normal;color:#10266A;letter-spacing:0.1px;">Batch Buffer</div>
<div style="left:499px;top:137px;width:530px;height:453px;background:#fff;"></div>
<svg style="position:absolute;left:511px;top:147px;" width="194" height="44" viewBox="0 0 194 44"><rect width="194" height="44" fill="#780202"/><path d="M4.8 3.5 L7.3 0.8999999999999999 H22.7 L25.2 3.5 L22.7 6.1 H7.3Z" fill="#FF7430"/><path d="M4.8 22 L7.3 19.4 H22.7 L25.2 22 L22.7 24.6 H7.3Z" fill="#8E2008"/><path d="M4.8 40.5 L7.3 37.9 H22.7 L25.2 40.5 L22.7 43.1 H7.3Z" fill="#FF7430"/><path d="M3.5 4.8 L6.1 7.3 V18.5 L3.5 21 L0.8999999999999999 18.5 V7.3Z" fill="#FF7430"/><path d="M26.5 4.8 L29.1 7.3 V18.5 L26.5 21 L23.9 18.5 V7.3Z" fill="#FF7430"/><path d="M3.5 23 L6.1 25.5 V36.7 L3.5 39.2 L0.8999999999999999 36.7 V25.5Z" fill="#FF7430"/><path d="M26.5 23 L29.1 25.5 V36.7 L26.5 39.2 L23.9 36.7 V25.5Z" fill="#FF7430"/><path d="M34.8 3.5 L37.3 0.8999999999999999 H52.7 L55.2 3.5 L52.7 6.1 H37.3Z" fill="#FF7430"/><path d="M34.8 22 L37.3 19.4 H52.7 L55.2 22 L52.7 24.6 H37.3Z" fill="#8E2008"/><path d="M34.8 40.5 L37.3 37.9 H52.7 L55.2 40.5 L52.7 43.1 H37.3Z" fill="#FF7430"/><path d="M33.5 4.8 L36.1 7.3 V18.5 L33.5 21 L30.9 18.5 V7.3Z" fill="#FF7430"/><path d="M56.5 4.8 L59.1 7.3 V18.5 L56.5 21 L53.9 18.5 V7.3Z" fill="#FF7430"/><path d="M33.5 23 L36.1 25.5 V36.7 L33.5 39.2 L30.9 36.7 V25.5Z" fill="#FF7430"/><path d="M56.5 23 L59.1 25.5 V36.7 L56.5 39.2 L53.9 36.7 V25.5Z" fill="#FF7430"/><path d="M71.8 3.5 L74.3 0.8999999999999999 H89.7 L92.2 3.5 L89.7 6.1 H74.3Z" fill="#FF7430"/><path d="M71.8 22 L74.3 19.4 H89.7 L92.2 22 L89.7 24.6 H74.3Z" fill="#FF7430"/><path d="M71.8 40.5 L74.3 37.9 H89.7 L92.2 40.5 L89.7 43.1 H74.3Z" fill="#FF7430"/><path d="M70.5 4.8 L73.1 7.3 V18.5 L70.5 21 L67.9 18.5 V7.3Z" fill="#8E2008"/><path d="M93.5 4.8 L96.1 7.3 V18.5 L93.5 21 L90.9 18.5 V7.3Z" fill="#FF7430"/><path d="M70.5 23 L73.1 25.5 V36.7 L70.5 39.2 L67.9 36.7 V25.5Z" fill="#8E2008"/><path d="M93.5 23 L96.1 25.5 V36.7 L93.5 39.2 L90.9 36.7 V25.5Z" fill="#FF7430"/><path d="M101.8 3.5 L104.3 0.8999999999999999 H119.7 L122.2 3.5 L119.7 6.1 H104.3Z" fill="#FF7430"/><path d="M101.8 22 L104.3 19.4 H119.7 L122.2 22 L119.7 24.6 H104.3Z" fill="#FF7430"/><path d="M101.8 40.5 L104.3 37.9 H119.7 L122.2 40.5 L119.7 43.1 H104.3Z" fill="#FF7430"/><path d="M100.5 4.8 L103.1 7.3 V18.5 L100.5 21 L97.9 18.5 V7.3Z" fill="#FF7430"/><path d="M123.5 4.8 L126.1 7.3 V18.5 L123.5 21 L120.9 18.5 V7.3Z" fill="#8E2008"/><path d="M100.5 23 L103.1 25.5 V36.7 L100.5 39.2 L97.9 36.7 V25.5Z" fill="#8E2008"/><path d="M123.5 23 L126.1 25.5 V36.7 L123.5 39.2 L120.9 36.7 V25.5Z" fill="#FF7430"/><path d="M138.8 3.5 L141.3 0.8999999999999999 H156.7 L159.2 3.5 L156.7 6.1 H141.3Z" fill="#FF7430"/><path d="M138.8 22 L141.3 19.4 H156.7 L159.2 22 L156.7 24.6 H141.3Z" fill="#FF7430"/><path d="M138.8 40.5 L141.3 37.9 H156.7 L159.2 40.5 L156.7 43.1 H141.3Z" fill="#FF7430"/><path d="M137.5 4.8 L140.1 7.3 V18.5 L137.5 21 L134.9 18.5 V7.3Z" fill="#8E2008"/><path d="M160.5 4.8 L163.1 7.3 V18.5 L160.5 21 L157.9 18.5 V7.3Z" fill="#FF7430"/><path d="M137.5 23 L140.1 25.5 V36.7 L137.5 39.2 L134.9 36.7 V25.5Z" fill="#FF7430"/><path d="M160.5 23 L163.1 25.5 V36.7 L160.5 39.2 L157.9 36.7 V25.5Z" fill="#8E2008"/><path d="M168.8 3.5 L171.3 0.8999999999999999 H186.7 L189.2 3.5 L186.7 6.1 H171.3Z" fill="#FF7430"/><path d="M168.8 22 L171.3 19.4 H186.7 L189.2 22 L186.7 24.6 H171.3Z" fill="#8E2008"/><path d="M168.8 40.5 L171.3 37.9 H186.7 L189.2 40.5 L186.7 43.1 H171.3Z" fill="#8E2008"/><path d="M167.5 4.8 L170.1 7.3 V18.5 L167.5 21 L164.9 18.5 V7.3Z" fill="#8E2008"/><path d="M190.5 4.8 L193.1 7.3 V18.5 L190.5 21 L187.9 18.5 V7.3Z" fill="#FF7430"/><path d="M167.5 23 L170.1 25.5 V36.7 L167.5 39.2 L164.9 36.7 V25.5Z" fill="#8E2008"/><path d="M190.5 23 L193.1 25.5 V36.7 L190.5 39.2 L187.9 36.7 V25.5Z" fill="#FF7430"/><rect x="61" y="11.5" width="5" height="5.5" fill="#FF7430"/><rect x="61" y="26.5" width="5" height="5.5" fill="#FF7430"/><rect x="128" y="11.5" width="5" height="5.5" fill="#FF7430"/><rect x="128" y="26.5" width="5" height="5.5" fill="#FF7430"/></svg>
<div style="left:508px;top:199px;width:200px;height:50px;background:#FFFF00;"></div>
<div style="left:508.0px;top:216.0px;width:200px;height:16px;line-height:16px;font-size:11.5px;font-weight:bold;color:#000;text-align:center;">EXECUTING</div>
<div style="left:508px;top:260px;width:199px;height:26px;border:1px solid #A0A0A0;"></div>
<div style="left:514px;top:255px;height:14px;line-height:14px;font-size:11px;padding:0 2px;background:#fff;">Executing Buffer</div>
<div style="left:510px;top:268.0px;height:16px;line-height:16px;font-size:13px;font-weight:bold;color:#000;letter-spacing:0.3px;">28-9-12_2.tcl</div>
<div style="left:508px;top:299px;width:199px;height:200px;border:1px solid #A0A0A0;"></div>
<div style="left:514px;top:293px;height:14px;line-height:14px;font-size:11px;padding:0 2px;background:#fff;">Buffer Queue</div>
<div style="left:511px;top:306px;width:193px;height:134px;background:#fff;border:2px solid;border-color:#404040 #D4D0C8 #D4D0C8 #404040;box-shadow:inset 1px 1px #808080;"></div>
<div style="left:511px;top:443px;width:95px;height:26px;background:#D4D0C8;border:1px solid #000;box-shadow:inset 1px 1px #fff,inset -1px -1px #808080;"></div>
<div style="left:608px;top:443px;width:97px;height:26px;background:#D4D0C8;border:1px solid #000;box-shadow:inset 1px 1px #fff,inset -1px -1px #808080;"></div>
<svg style="position:absolute;left:523px;top:449px;" width="13" height="13" viewBox="0 0 13 13"><path d="M4.5 0.5H8.5V4.5H12.5V8.5H8.5V12.5H4.5V8.5H0.5V4.5H4.5Z" fill="#8CD060" stroke="#4A9A30"/></svg>
<div style="left:543px;top:449.0px;height:14px;line-height:14px;font-size:11px;font-weight:normal;color:#000;">Workspace</div>
<svg style="position:absolute;left:620px;top:449px;" width="13" height="13" viewBox="0 0 13 13"><path d="M4.5 0.5H8.5V4.5H12.5V8.5H8.5V12.5H4.5V8.5H0.5V4.5H4.5Z" fill="#8CD060" stroke="#4A9A30"/></svg>
<div style="left:640px;top:449.0px;height:14px;line-height:14px;font-size:11px;font-weight:normal;color:#000;">File System</div>
<div style="left:511px;top:472px;width:194px;height:25px;background:#D4D0C8;border:1px solid #000;box-shadow:inset 1px 1px #fff,inset -1px -1px #808080;"></div>
<svg style="position:absolute;left:580px;top:477px;" width="14" height="14" viewBox="0 0 14 14"><path d="M2 2L12 12M12 2L2 12" stroke="#E03040" stroke-width="3.5" stroke-linecap="round"/></svg>
<div style="left:599px;top:477.0px;height:14px;line-height:14px;font-size:11px;font-weight:normal;color:#000;">Remove</div>
<div style="left:508px;top:505px;width:200px;height:26px;background:repeating-conic-gradient(#F4F3EF 0% 25%, #DCD9D1 0% 50%) 0 0/2px 2px;border:1px solid #000;box-shadow:inset 1px 1px #fff,inset -1px -1px #808080;"></div>
<div style="left:580px;top:510px;width:5px;height:16px;background:linear-gradient(90deg,#90B8F0,#3A70D8);border-radius:1px;"></div>
<div style="left:587px;top:510px;width:5px;height:16px;background:linear-gradient(90deg,#90B8F0,#3A70D8);border-radius:1px;"></div>
<div style="left:599px;top:510.0px;height:16px;line-height:16px;font-size:13px;font-weight:bold;color:#000;">Pause</div>
<div style="left:508px;top:536px;width:200px;height:26px;background:#D4D0C8;border:1px solid #000;box-shadow:inset 1px 1px #fff,inset -1px -1px #808080;"></div>
<div style="left:568px;top:541px;width:14px;height:14px;background:radial-gradient(circle at 40% 35%,#FFB090,#F04020 60%,#D02010);border-radius:50%;"></div>
<div style="left:589px;top:541.0px;height:16px;line-height:16px;font-size:13px;font-weight:bold;color:#000;letter-spacing:0.4px;">Interrupt</div>
<div style="left:508px;top:568px;width:13px;height:13px;border:2px solid #000;background:#fff;"></div>
<svg style="position:absolute;left:510px;top:570px;" width="9" height="9" viewBox="0 0 9 9"><path d="M1 4 L3.5 7 L8 1.5" stroke="#000" stroke-width="2" fill="none"/></svg>
<div style="left:526px;top:568.0px;height:14px;line-height:14px;font-size:11px;font-weight:normal;color:#000;">Check instrument ready</div>
<div style="left:499px;top:589px;width:530px;height:21px;background:#D4D0C8;border-top:1px solid #fff;"></div>
<div style="left:501px;top:589px;width:27px;height:19px;background:#fff;"></div>
<div style="left:504px;top:592.0px;height:14px;line-height:14px;font-size:11px;font-weight:normal;color:#000;">Run</div>
<div style="left:528px;top:590px;width:45px;height:18px;border-right:1px solid #9C9C9C;"></div>
<div style="left:531px;top:592.0px;height:14px;line-height:14px;font-size:11px;font-weight:normal;color:#000;">Validate</div>
<div style="left:718px;top:148px;width:307px;height:213px;border:1px solid #A0A0A0;"></div>
<div style="left:724px;top:141px;height:16px;line-height:16px;font-size:13px;font-weight:bold;padding:0 2px;background:#fff;">Buffer</div>
<div style="left:720px;top:156px;height:16px;line-height:16px;font-size:13px;font-weight:bold;letter-spacing:0.42px;background:#FFFF00;">#300K data sets</div>
<div style="left:720px;top:172px;height:16px;line-height:16px;font-size:13px;font-weight:bold;letter-spacing:0.42px;background:#FFFF00;">#drive qh 0 qk 0 ql 1 en 0</div>
<div style="left:720px;top:188px;height:16px;line-height:16px;font-size:13px;font-weight:bold;letter-spacing:0.42px;background:#FFFF00;">#runscan ql 0.8 1.2 101 time 60</div>
<div style="left:720px;top:204px;height:16px;line-height:16px;font-size:13px;font-weight:bold;letter-spacing:0.42px;background:#FFFF00;">runscan ql 0.8 1.2 101 time 60</div>
<div style="left:720px;top:236px;height:16px;line-height:16px;font-size:13px;font-weight:bold;letter-spacing:0.42px;">runscan ql 0.8 1.2 101 time 120</div>
<div style="left:720px;top:252px;height:16px;line-height:16px;font-size:13px;font-weight:bold;letter-spacing:0.42px;">runscan ql 0.932 1.1 43 time 240</div>
<div style="left:1007px;top:157px;width:16px;height:186px;background:repeating-conic-gradient(#F4F3EF 0% 25%, #DCD9D1 0% 50%) 0 0/2px 2px;"></div>
<div style="left:1007px;top:157px;width:16px;height:15px;background:#D4D0C8;border:1px solid;border-color:#D4D0C8 #404040 #404040 #D4D0C8;box-shadow:inset 1px 1px #fff,inset -1px -1px #808080;"></div>
<svg style="position:absolute;left:1007px;top:157px" width="15" height="15"><use href="#sarrowU" width="15" height="15"/></svg>
<div style="left:1008px;top:158px;width:14px;height:13px;background:rgba(212,208,200,0.55);"></div>
<div style="left:1007px;top:327px;width:16px;height:16px;background:#D4D0C8;border:1px solid;border-color:#D4D0C8 #404040 #404040 #D4D0C8;box-shadow:inset 1px 1px #fff,inset -1px -1px #808080;"></div>
<svg style="position:absolute;left:1007px;top:327px" width="15" height="15"><use href="#sarrowD" width="15" height="15"/></svg>
<div style="left:1008px;top:328px;width:14px;height:14px;background:rgba(212,208,200,0.55);"></div>
<div style="left:720px;top:343px;width:287px;height:16px;background:repeating-conic-gradient(#F4F3EF 0% 25%, #DCD9D1 0% 50%) 0 0/2px 2px;"></div>
<div style="left:720px;top:343px;width:16px;height:16px;background:#D4D0C8;border:1px solid;border-color:#D4D0C8 #404040 #404040 #D4D0C8;box-shadow:inset 1px 1px #fff,inset -1px -1px #808080;"></div>
<svg style="position:absolute;left:720px;top:343px" width="15" height="15"><use href="#sarrowL" width="15" height="15"/></svg>
<div style="left:721px;top:344px;width:14px;height:14px;background:rgba(212,208,200,0.55);"></div>
<div style="left:991px;top:343px;width:16px;height:16px;background:#D4D0C8;border:1px solid;border-color:#D4D0C8 #404040 #404040 #D4D0C8;box-shadow:inset 1px 1px #fff,inset -1px -1px #808080;"></div>
<svg style="position:absolute;left:991px;top:343px" width="15" height="15"><use href="#sarrowR" width="15" height="15"/></svg>
<div style="left:992px;top:344px;width:14px;height:14px;background:rgba(212,208,200,0.55);"></div>
<div style="left:1007px;top:343px;width:16px;height:16px;background:#D4D0C8;"></div>
<div style="left:718px;top:374px;width:307px;height:213px;border:1px solid #A0A0A0;"></div>
<div style="left:724px;top:367px;height:16px;line-height:16px;font-size:13px;font-weight:bold;padding:0 2px;background:#fff;">Log</div>
<div style="left:720px;top:381px;width:287px;height:188px;">
<div style="left:1px;top:2px;height:16px;line-height:16px;font-size:13px;font-weight:bold;letter-spacing:0.85px;">[2012-09-28 15:10:36]</div>
<div style="left:155.5px;top:2px;height:16px;line-height:16px;font-size:13px;font-weight:bold;letter-spacing:0.3px;white-space:pre;">Scan start:  0.80000</div>
<div style="left:1px;top:18px;height:16px;line-height:16px;font-size:13px;font-weight:bold;letter-spacing:0.85px;">[2012-09-28 15:10:36]</div>
<div style="left:155.5px;top:18px;height:16px;line-height:16px;font-size:13px;font-weight:bold;letter-spacing:0.3px;white-space:pre;">Datatype: BEAM_MONITOR</div>
<div style="left:1px;top:34px;height:16px;line-height:16px;font-size:13px;font-weight:bold;letter-spacing:0.85px;">[2012-09-28 15:10:36]</div>
<div style="left:155.5px;top:34px;height:16px;line-height:16px;font-size:13px;font-weight:bold;letter-spacing:0.3px;white-space:pre;">Driving    a1 from   20</div>
<div style="left:1px;top:50px;height:16px;line-height:16px;font-size:13px;font-weight:bold;letter-spacing:0.85px;">[2012-09-28 15:10:36]</div>
<div style="left:155.5px;top:50px;height:16px;line-height:16px;font-size:13px;font-weight:bold;letter-spacing:0.3px;white-space:pre;">Driving    a2 from   40</div>
<div style="left:1px;top:66px;height:16px;line-height:16px;font-size:13px;font-weight:bold;letter-spacing:0.85px;">[2012-09-28 15:10:36]</div>
<div style="left:155.5px;top:66px;height:16px;line-height:16px;font-size:13px;font-weight:bold;letter-spacing:0.3px;white-space:pre;">Driving    a5 from   20</div>
<div style="left:1px;top:82px;height:16px;line-height:16px;font-size:13px;font-weight:bold;letter-spacing:0.85px;">[2012-09-28 15:10:36]</div>
<div style="left:155.5px;top:82px;height:16px;line-height:16px;font-size:13px;font-weight:bold;letter-spacing:0.3px;white-space:pre;">Driving    a6 from   40</div>
<div style="left:1px;top:98px;height:16px;line-height:16px;font-size:13px;font-weight:bold;letter-spacing:0.85px;">[2012-09-28 15:10:36]</div>
<div style="left:155.5px;top:98px;height:16px;line-height:16px;font-size:13px;font-weight:bold;letter-spacing:0.3px;white-space:pre;">Driving    a3 from  -1</div>
<div style="left:1px;top:114px;height:16px;line-height:16px;font-size:13px;font-weight:bold;letter-spacing:0.85px;">[2012-09-28 15:10:36]</div>
<div style="left:155.5px;top:114px;height:16px;line-height:16px;font-size:13px;font-weight:bold;letter-spacing:0.3px;white-space:pre;">Driving    a4 from  -3</div>
<div style="left:1px;top:130px;height:16px;line-height:16px;font-size:13px;font-weight:bold;letter-spacing:0.85px;">[2012-09-28 15:11:41]</div>
<div style="left:155.5px;top:130px;height:16px;line-height:16px;font-size:13px;font-weight:bold;letter-spacing:0.3px;white-space:pre;">NP   ql       Counts</div>
<div style="left:1px;top:146px;height:16px;line-height:16px;font-size:13px;font-weight:bold;letter-spacing:0.85px;">[2012-09-28 15:11:41]</div>
<div style="left:155.5px;top:146px;height:16px;line-height:16px;font-size:13px;font-weight:bold;letter-spacing:0.3px;white-space:pre;">0    0.800     112555</div>
<div style="left:1px;top:162px;height:16px;line-height:16px;font-size:13px;font-weight:bold;letter-spacing:0.85px;">[2012-09-28 15:11:41]</div>
<div style="left:155.5px;top:162px;height:16px;line-height:16px;font-size:13px;font-weight:bold;letter-spacing:0.3px;white-space:pre;">Channel 0 112555</div>
<div style="left:1px;top:178px;height:16px;line-height:16px;font-size:13px;font-weight:bold;letter-spacing:0.85px;">[2012-09-28 15:11:41]</div>
<div style="left:155.5px;top:178px;height:16px;line-height:16px;font-size:13px;font-weight:bold;letter-spacing:0.3px;white-space:pre;">Channel 1 35</div>
</div>
<div style="left:1007px;top:383px;width:16px;height:186px;background:repeating-conic-gradient(#F4F3EF 0% 25%, #DCD9D1 0% 50%) 0 0/2px 2px;"></div>
<div style="left:1007px;top:383px;width:16px;height:15px;background:#D4D0C8;border:1px solid;border-color:#D4D0C8 #404040 #404040 #D4D0C8;box-shadow:inset 1px 1px #fff,inset -1px -1px #808080;"></div>
<svg style="position:absolute;left:1007px;top:383px" width="15" height="15"><use href="#sarrowU" width="15" height="15"/></svg>
<div style="left:1007px;top:398px;width:16px;height:8px;background:#D4D0C8;border:1px solid;border-color:#D4D0C8 #404040 #404040 #D4D0C8;box-shadow:inset 1px 1px #fff,inset -1px -1px #808080;"></div>
<div style="left:1007px;top:554px;width:16px;height:15px;background:#D4D0C8;border:1px solid;border-color:#D4D0C8 #404040 #404040 #D4D0C8;box-shadow:inset 1px 1px #fff,inset -1px -1px #808080;"></div>
<svg style="position:absolute;left:1007px;top:554px" width="15" height="15"><use href="#sarrowD" width="15" height="15"/></svg>
<div style="left:720px;top:569px;width:287px;height:16px;background:repeating-conic-gradient(#F4F3EF 0% 25%, #DCD9D1 0% 50%) 0 0/2px 2px;"></div>
<div style="left:721px;top:569px;width:16px;height:16px;background:#D4D0C8;border:1px solid;border-color:#D4D0C8 #404040 #404040 #D4D0C8;box-shadow:inset 1px 1px #fff,inset -1px -1px #808080;"></div>
<svg style="position:absolute;left:721px;top:569px" width="15" height="15"><use href="#sarrowL" width="15" height="15"/></svg>
<div style="left:736px;top:569px;width:123px;height:16px;background:#D4D0C8;border:1px solid;border-color:#D4D0C8 #404040 #404040 #D4D0C8;box-shadow:inset 1px 1px #fff,inset -1px -1px #808080;"></div>
<div style="left:991px;top:569px;width:16px;height:16px;background:#D4D0C8;border:1px solid;border-color:#D4D0C8 #404040 #404040 #D4D0C8;box-shadow:inset 1px 1px #fff,inset -1px -1px #808080;"></div>
<svg style="position:absolute;left:991px;top:569px" width="15" height="15"><use href="#sarrowR" width="15" height="15"/></svg>
<div style="left:1007px;top:569px;width:16px;height:16px;background:#D4D0C8;"></div>
<div style="left:1034px;top:78px;width:240px;height:922px;border:1px solid #9C9C9C;border-radius:6px 6px 0 0;background:#D4D0C8;"></div>
<svg style="position:absolute;left:1035px;top:79px" width="110" height="24"><defs><linearGradient id="ctab" x1="0" y1="0" x2="0" y2="1"><stop offset="0" stop-color="#FFFFFF"/><stop offset="1" stop-color="#DEDBD4"/></linearGradient></defs><path d="M0.5 24 V6 Q0.5 0.5 6 0.5 H74 C91.0 0.5 91.0 23 108 23 V24Z" fill="url(#ctab)" stroke="#9C9C9C" stroke-width="1"/></svg>
<svg style="position:absolute;left:1038px;top:84px;" width="16" height="12" viewBox="0 0 16 12"><path d="M1 11 Q1 1 8 1 Q15 1 15 11Z" fill="#505050" stroke="#303030"/><path d="M4 8 Q8 4 12 8" stroke="#909090" fill="none"/></svg>
<div style="left:1057px;top:83.0px;height:14px;line-height:14px;font-size:11px;font-weight:normal;color:#000;">Cruise Panel</div>
<div style="left:1035px;top:102px;width:222px;height:2px;background:#B8B6AE;"></div>
<div style="left:1035px;top:104px;width:222px;height:33px;background:linear-gradient(#FFFFFF,#F4F5F8 60%,#E4E7EE);"></div>
<div style="left:1043px;top:108.0px;height:24px;line-height:24px;font-size:18.5px;font-weight:normal;color:#10266A;">Taipan</div>
<svg style="position:absolute;left:1227px;top:113px;" width="16" height="14" viewBox="0 0 16 14"><path d="M1 7 L7 1 V4 H14 V10 H7 V13Z" fill="#FCE6A8" stroke="#D8A040" stroke-width="1"/></svg>
<svg style="position:absolute;left:1250px;top:113px;" width="8" height="14" viewBox="0 0 8 14"><path d="M1 4 H8 V10 H1Z" fill="#FCE6A8" stroke="#D8A040" stroke-width="1"/></svg>
<div style="left:1037px;top:137px;width:220px;height:860px;background:#373A45;background-image:repeating-linear-gradient(90deg,rgba(255,255,255,0.025) 0 1px,transparent 1px 3px),repeating-linear-gradient(0deg,rgba(0,0,0,0.06) 0 1px,transparent 1px 4px);"></div>
<div style="left:1045px;top:149.0px;height:14px;line-height:14px;font-size:11px;font-weight:bold;color:#F2F2F2;letter-spacing:0.1px;">SERVER STATUS</div>
<div style="left:1142px;top:155px;width:103px;height:2px;background:#E8E8E8;"></div>
<div style="left:1052px;top:170px;width:205px;height:14px;background:#FFFF00;"></div>
<div style="left:1095.0px;top:170.0px;width:120px;height:14px;line-height:14px;font-size:11px;font-weight:bold;color:#000;text-align:center;">COUNTING</div>
<div style="left:1045px;top:195.0px;height:14px;line-height:14px;font-size:11px;font-weight:bold;color:#F2F2F2;letter-spacing:0.1px;">BEAM MONITOR 1</div>
<div style="left:1150px;top:201px;width:95px;height:2px;background:#E8E8E8;"></div>
<svg style="position:absolute;left:1060px;top:220px;" width="194" height="166" viewBox="0 0 194 166"><defs><linearGradient id="gface" x1="0" y1="0" x2="0" y2="1"><stop offset="0" stop-color="#FDFDFF"/><stop offset="1" stop-color="#B9BBEA"/></linearGradient></defs><ellipse cx="97" cy="83" rx="93" ry="79" fill="url(#gface)" stroke="#000" stroke-width="3"/><line x1="58.0" y1="139.3" x2="55.0" y2="144.5" stroke="#000" stroke-width="3"/><text x="62.0" y="139.0" font-size="11" fill="#3C3CD8" text-anchor="middle" font-family="Liberation Sans">0</text><line x1="41.8" y1="129.7" x2="40.4" y2="131.1" stroke="#000" stroke-width="1"/><line x1="29.5" y1="115.5" x2="24.3" y2="118.5" stroke="#000" stroke-width="3"/><text x="36.4" y="117.0" font-size="11" fill="#3C3CD8" text-anchor="middle" font-family="Liberation Sans">1</text><line x1="21.7" y1="100.1" x2="19.7" y2="100.6" stroke="#000" stroke-width="1"/><line x1="19.0" y1="83.0" x2="13.0" y2="83.0" stroke="#000" stroke-width="3"/><text x="27.0" y="87.0" font-size="11" fill="#3C3CD8" text-anchor="middle" font-family="Liberation Sans">2</text><line x1="21.7" y1="65.9" x2="19.7" y2="65.4" stroke="#000" stroke-width="1"/><line x1="29.5" y1="50.5" x2="24.3" y2="47.5" stroke="#000" stroke-width="3"/><text x="36.4" y="57.0" font-size="11" fill="#3C3CD8" text-anchor="middle" font-family="Liberation Sans">3</text><line x1="41.8" y1="36.3" x2="40.4" y2="34.9" stroke="#000" stroke-width="1"/><line x1="58.0" y1="26.7" x2="55.0" y2="21.5" stroke="#000" stroke-width="3"/><text x="62.0" y="35.0" font-size="11" fill="#3C3CD8" text-anchor="middle" font-family="Liberation Sans">4</text><line x1="76.8" y1="19.2" x2="76.3" y2="17.3" stroke="#000" stroke-width="1"/><line x1="97.0" y1="18.0" x2="97.0" y2="12.0" stroke="#000" stroke-width="3"/><text x="97.0" y="27.0" font-size="11" fill="#3C3CD8" text-anchor="middle" font-family="Liberation Sans">5</text><line x1="117.2" y1="19.2" x2="117.7" y2="17.3" stroke="#000" stroke-width="1"/><line x1="136.0" y1="26.7" x2="139.0" y2="21.5" stroke="#000" stroke-width="3"/><text x="132.0" y="35.0" font-size="11" fill="#3C3CD8" text-anchor="middle" font-family="Liberation Sans">6</text><line x1="152.2" y1="36.3" x2="153.6" y2="34.9" stroke="#000" stroke-width="1"/><line x1="164.5" y1="50.5" x2="169.7" y2="47.5" stroke="#000" stroke-width="3"/><text x="157.6" y="57.0" font-size="11" fill="#3C3CD8" text-anchor="middle" font-family="Liberation Sans">7</text><line x1="172.3" y1="65.9" x2="174.3" y2="65.4" stroke="#000" stroke-width="1"/><line x1="175.0" y1="83.0" x2="181.0" y2="83.0" stroke="#000" stroke-width="3"/><text x="167.0" y="87.0" font-size="11" fill="#3C3CD8" text-anchor="middle" font-family="Liberation Sans">8</text><line x1="172.3" y1="100.1" x2="174.3" y2="100.6" stroke="#000" stroke-width="1"/><line x1="164.5" y1="115.5" x2="169.7" y2="118.5" stroke="#000" stroke-width="3"/><text x="157.6" y="117.0" font-size="11" fill="#3C3CD8" text-anchor="middle" font-family="Liberation Sans">9</text><line x1="152.2" y1="129.7" x2="153.6" y2="131.1" stroke="#000" stroke-width="1"/><line x1="136.0" y1="139.3" x2="139.0" y2="144.5" stroke="#000" stroke-width="3"/><text x="132.0" y="139.0" font-size="11" fill="#3C3CD8" text-anchor="middle" font-family="Liberation Sans">10</text><path d="M71.0 122.8 A52 46 0 0 1 97.0 37.0" stroke="#F02030" stroke-width="2.2" fill="none"/><path d="M73.0 119.4 A48 42 0 0 1 97.0 41.0" stroke="#F02030" stroke-width="2.2" fill="none"/><path d="M97.0 37.0 A52 46 0 0 1 147.2 71.1" stroke="#F0C030" stroke-width="2.2" fill="none"/><path d="M97.0 41.0 A48 42 0 0 1 143.4 72.1" stroke="#F0C030" stroke-width="2.2" fill="none"/><path d="M147.2 71.1 A52 46 0 0 1 124.6 122.0" stroke="#30E030" stroke-width="2.2" fill="none"/><path d="M143.4 72.1 A48 42 0 0 1 122.4 118.6" stroke="#30E030" stroke-width="2.2" fill="none"/><path d="M92.8 85.7 L138.0 146.0 L101.2 80.3Z" fill="#7C7C7C" stroke="#000" stroke-width="1.3"/><circle cx="97" cy="83" r="5" fill="#fff" stroke="#000" stroke-width="2"/><text x="97" y="154" font-size="10.5" font-weight="bold" fill="#1A1A3A" text-anchor="middle" font-family="Liberation Sans" letter-spacing="-0.2">counts/sec</text></svg>
<div style="left:1062px;top:390px;width:189px;height:21px;background:#D4D0C8;border:1px solid #fff;border-right-color:#A0A0A0;border-bottom-color:#A0A0A0;box-shadow:inset 1px 1px #808080;"></div>
<div style="left:1066px;top:393.5px;height:14px;line-height:14px;font-size:11px;font-weight:normal;color:#000;">x1000</div>
<div style="left:1232px;top:392px;width:16px;height:17px;background:#D4D0C8;border:1px solid;border-color:#D4D0C8 #404040 #404040 #D4D0C8;box-shadow:inset 1px 1px #fff,inset -1px -1px #808080;"></div>
<svg style="position:absolute;left:1232px;top:393px" width="15" height="15"><use href="#sarrowD" width="15" height="15"/></svg>
<div style="left:1053px;top:417.0px;height:14px;line-height:14px;font-size:11px;font-weight:bold;color:#F2F2F2;">BM1:</div>
<div style="left:1169px;top:417.0px;height:14px;line-height:14px;font-size:11px;font-weight:bold;color:#F2F2F2;letter-spacing:0.3px;">87245</div>
<div style="left:1209px;top:417.0px;height:14px;line-height:14px;font-size:11px;font-weight:normal;color:#F2F2F2;">counts/sec</div>
<div style="left:1045px;top:442.0px;height:14px;line-height:14px;font-size:11px;font-weight:bold;color:#F2F2F2;letter-spacing:0.1px;">BEAM MONITOR 2</div>
<div style="left:1150px;top:448px;width:95px;height:2px;background:#E8E8E8;"></div>
<svg style="position:absolute;left:1060px;top:467px;" width="194" height="166" viewBox="0 0 194 166"><defs><linearGradient id="gface" x1="0" y1="0" x2="0" y2="1"><stop offset="0" stop-color="#FDFDFF"/><stop offset="1" stop-color="#B9BBEA"/></linearGradient></defs><ellipse cx="97" cy="83" rx="93" ry="79" fill="url(#gface)" stroke="#000" stroke-width="3"/><line x1="58.0" y1="139.3" x2="55.0" y2="144.5" stroke="#000" stroke-width="3"/><text x="62.0" y="139.0" font-size="11" fill="#3C3CD8" text-anchor="middle" font-family="Liberation Sans">0</text><line x1="41.8" y1="129.7" x2="40.4" y2="131.1" stroke="#000" stroke-width="1"/><line x1="29.5" y1="115.5" x2="24.3" y2="118.5" stroke="#000" stroke-width="3"/><text x="36.4" y="117.0" font-size="11" fill="#3C3CD8" text-anchor="middle" font-family="Liberation Sans">1</text><line x1="21.7" y1="100.1" x2="19.7" y2="100.6" stroke="#000" stroke-width="1"/><line x1="19.0" y1="83.0" x2="13.0" y2="83.0" stroke="#000" stroke-width="3"/><text x="27.0" y="87.0" font-size="11" fill="#3C3CD8" text-anchor="middle" font-family="Liberation Sans">2</text><line x1="21.7" y1="65.9" x2="19.7" y2="65.4" stroke="#000" stroke-width="1"/><line x1="29.5" y1="50.5" x2="24.3" y2="47.5" stroke="#000" stroke-width="3"/><text x="36.4" y="57.0" font-size="11" fill="#3C3CD8" text-anchor="middle" font-family="Liberation Sans">3</text><line x1="41.8" y1="36.3" x2="40.4" y2="34.9" stroke="#000" stroke-width="1"/><line x1="58.0" y1="26.7" x2="55.0" y2="21.5" stroke="#000" stroke-width="3"/><text x="62.0" y="35.0" font-size="11" fill="#3C3CD8" text-anchor="middle" font-family="Liberation Sans">4</text><line x1="76.8" y1="19.2" x2="76.3" y2="17.3" stroke="#000" stroke-width="1"/><line x1="97.0" y1="18.0" x2="97.0" y2="12.0" stroke="#000" stroke-width="3"/><text x="97.0" y="27.0" font-size="11" fill="#3C3CD8" text-anchor="middle" font-family="Liberation Sans">5</text><line x1="117.2" y1="19.2" x2="117.7" y2="17.3" stroke="#000" stroke-width="1"/><line x1="136.0" y1="26.7" x2="139.0" y2="21.5" stroke="#000" stroke-width="3"/><text x="132.0" y="35.0" font-size="11" fill="#3C3CD8" text-anchor="middle" font-family="Liberation Sans">6</text><line x1="152.2" y1="36.3" x2="153.6" y2="34.9" stroke="#000" stroke-width="1"/><line x1="164.5" y1="50.5" x2="169.7" y2="47.5" stroke="#000" stroke-width="3"/><text x="157.6" y="57.0" font-size="11" fill="#3C3CD8" text-anchor="middle" font-family="Liberation Sans">7</text><line x1="172.3" y1="65.9" x2="174.3" y2="65.4" stroke="#000" stroke-width="1"/><line x1="175.0" y1="83.0" x2="181.0" y2="83.0" stroke="#000" stroke-width="3"/><text x="167.0" y="87.0" font-size="11" fill="#3C3CD8" text-anchor="middle" font-family="Liberation Sans">8</text><line x1="172.3" y1="100.1" x2="174.3" y2="100.6" stroke="#000" stroke-width="1"/><line x1="164.5" y1="115.5" x2="169.7" y2="118.5" stroke="#000" stroke-width="3"/><text x="157.6" y="117.0" font-size="11" fill="#3C3CD8" text-anchor="middle" font-family="Liberation Sans">9</text><line x1="152.2" y1="129.7" x2="153.6" y2="131.1" stroke="#000" stroke-width="1"/><line x1="136.0" y1="139.3" x2="139.0" y2="144.5" stroke="#000" stroke-width="3"/><text x="132.0" y="139.0" font-size="11" fill="#3C3CD8" text-anchor="middle" font-family="Liberation Sans">10</text><path d="M71.0 122.8 A52 46 0 0 1 97.0 37.0" stroke="#F02030" stroke-width="2.2" fill="none"/><path d="M73.0 119.4 A48 42 0 0 1 97.0 41.0" stroke="#F02030" stroke-width="2.2" fill="none"/><path d="M97.0 37.0 A52 46 0 0 1 147.2 71.1" stroke="#F0C030" stroke-width="2.2" fill="none"/><path d="M97.0 41.0 A48 42 0 0 1 143.4 72.1" stroke="#F0C030" stroke-width="2.2" fill="none"/><path d="M147.2 71.1 A52 46 0 0 1 124.6 122.0" stroke="#30E030" stroke-width="2.2" fill="none"/><path d="M143.4 72.1 A48 42 0 0 1 122.4 118.6" stroke="#30E030" stroke-width="2.2" fill="none"/><path d="M92.9 80.1 L53.0 145.0 L101.1 85.9Z" fill="#7C7C7C" stroke="#000" stroke-width="1.3"/><circle cx="97" cy="83" r="5" fill="#fff" stroke="#000" stroke-width="2"/><text x="97" y="154" font-size="10.5" font-weight="bold" fill="#1A1A3A" text-anchor="middle" font-family="Liberation Sans" letter-spacing="-0.2">counts/sec</text></svg>
<div style="left:1062px;top:637px;width:189px;height:21px;background:#D4D0C8;border:1px solid #fff;border-right-color:#A0A0A0;border-bottom-color:#A0A0A0;box-shadow:inset 1px 1px #808080;"></div>
<div style="left:1066px;top:640.5px;height:14px;line-height:14px;font-size:11px;font-weight:normal;color:#000;">x1000</div>
<div style="left:1232px;top:639px;width:16px;height:17px;background:#D4D0C8;border:1px solid;border-color:#D4D0C8 #404040 #404040 #D4D0C8;box-shadow:inset 1px 1px #fff,inset -1px -1px #808080;"></div>
<svg style="position:absolute;left:1232px;top:640px" width="15" height="15"><use href="#sarrowD" width="15" height="15"/></svg>
<div style="left:1053px;top:664.0px;height:14px;line-height:14px;font-size:11px;font-weight:bold;color:#F2F2F2;">BM2:</div>
<div style="left:1190px;top:664.0px;height:14px;line-height:14px;font-size:11px;font-weight:bold;color:#F2F2F2;">37</div>
<div style="left:1209px;top:664.0px;height:14px;line-height:14px;font-size:11px;font-weight:normal;color:#F2F2F2;">counts/sec</div>
<div style="left:1045px;top:689.0px;height:14px;line-height:14px;font-size:11px;font-weight:bold;color:#F2F2F2;letter-spacing:0.1px;">INTERRUPT</div>
<div style="left:1116px;top:695px;width:129px;height:2px;background:#E8E8E8;"></div>
<svg style="position:absolute;left:1124px;top:709px;" width="64" height="64" viewBox="0 0 64 64"><defs><linearGradient id="ilow" x1="0" y1="0" x2="1" y2="0.3"><stop offset="0" stop-color="#C80404"/><stop offset="0.6" stop-color="#E02008"/><stop offset="1" stop-color="#F86030"/></linearGradient><linearGradient id="isq" x1="0" y1="0" x2="0.3" y2="1"><stop offset="0" stop-color="#FFFFFF"/><stop offset="0.35" stop-color="#D8D8D8"/><stop offset="0.45" stop-color="#C4C4C4"/><stop offset="1" stop-color="#F4F4F4"/></linearGradient></defs><circle cx="32" cy="32" r="30" fill="#D8D4D8"/><circle cx="32" cy="32" r="27.5" fill="#EE5044"/><path d="M5.5 40 Q20 25 59.5 27 Q60 50 44 57 Q32 62 20 57 Q8 50 5.5 40Z" fill="url(#ilow)"/><rect x="18" y="18" width="28" height="30" rx="2" fill="url(#isq)" stroke="#B02010" stroke-width="0.5"/></svg>
<div style="left:32px;top:614px;width:328px;height:386px;border:1px solid #9C9C9C;border-radius:6px 6px 0 0;background:#D4D0C8;"></div>
<svg style="position:absolute;left:33px;top:615px" width="129" height="24"><defs><linearGradient id="ptab" x1="0" y1="0" x2="0" y2="1"><stop offset="0" stop-color="#FFFFFF"/><stop offset="1" stop-color="#DEDBD4"/></linearGradient></defs><path d="M0.5 24 V6 Q0.5 0.5 6 0.5 H94 C110.5 0.5 110.5 23 127 23 V24Z" fill="url(#ptab)" stroke="#9C9C9C" stroke-width="1"/></svg>
<svg style="position:absolute;left:37px;top:618px;" width="18" height="18" viewBox="0 0 18 18"><rect x="1" y="1" width="8" height="11" fill="#fff" stroke="#A0A0A0" stroke-width="0.8"/><path d="M4 8 H9 L10 9.5 H16 V17 H4Z" fill="#F5D58A" stroke="#B88A30" stroke-width="0.8"/></svg>
<div style="left:55px;top:620.0px;height:14px;line-height:14px;font-size:11px;font-weight:normal;color:#000;">Project Explorer</div>
<svg style="position:absolute;left:294px;top:619px;" width="15" height="14" viewBox="0 0 15 14"><rect x="1.5" y="1.5" width="12" height="11" fill="#fff" stroke="#7A9CC8"/><path d="M4 7.5H11" stroke="#4A6C98" stroke-width="1.5"/></svg>
<svg style="position:absolute;left:315px;top:617px;" width="18" height="17" viewBox="0 0 18 17"><path d="M2 5 L7 1 V3.5 H14 V6.5 H7 V9Z" fill="#F6D060" stroke="#C09020" stroke-width="0.8"/><path d="M16 12 L11 8 V10.5 H4 V13.5 H11 V16Z" fill="#F6D060" stroke="#C09020" stroke-width="0.8"/></svg>
<svg style="position:absolute;left:339px;top:619px;" width="12" height="8" viewBox="0 0 12 8"><path d="M1 1 H11 L6 6Z" fill="#fff" stroke="#606060"/></svg>
<div style="left:33px;top:637px;width:326px;height:2px;background:#B8B6AE;"></div>
<div style="left:35px;top:639px;width:307px;height:358px;background:#fff;"></div>
<div style="left:46px;top:649px;width:1px;height:51px;background:repeating-linear-gradient(#A0A0A0 0 1px,transparent 1px 2px);"></div>
<div style="left:65px;top:704px;width:1px;height:115px;background:repeating-linear-gradient(#A0A0A0 0 1px,transparent 1px 2px);"></div>
<div style="left:65px;top:822px;width:1px;height:175px;background:repeating-linear-gradient(#A0A0A0 0 1px,transparent 1px 2px);"></div>
<div style="left:84px;top:826px;width:1px;height:163px;background:repeating-linear-gradient(#A0A0A0 0 1px,transparent 1px 2px);"></div>
<div style="left:35px;top:639px;width:307px;height:358px;">
</div>
<div style="left:46px;top:649px;width:11px;height:1px;background:repeating-linear-gradient(90deg,#A0A0A0 0 1px,transparent 1px 2px);"></div>
<svg style="position:absolute;left:60px;top:641px" width="10" height="16"><use href="#server" width="10" height="16"/></svg>
<div style="left:77px;top:642.0px;height:14px;line-height:14px;font-size:11px;font-weight:normal;color:#000;">SIC Server</div>
<div style="left:51px;top:666px;width:6px;height:1px;background:repeating-linear-gradient(90deg,#A0A0A0 0 1px,transparent 1px 2px);"></div>
<svg style="position:absolute;left:42px;top:662px" width="9" height="9"><use href="#plus" width="9" height="9"/></svg>
<svg style="position:absolute;left:56px;top:657px" width="18" height="16"><use href="#pfolder" width="18" height="16"/></svg>
<div style="left:77px;top:659.0px;height:14px;line-height:14px;font-size:11px;font-weight:normal;color:#000;">Experiment</div>
<div style="left:51px;top:683px;width:6px;height:1px;background:repeating-linear-gradient(90deg,#A0A0A0 0 1px,transparent 1px 2px);"></div>
<svg style="position:absolute;left:42px;top:679px" width="9" height="9"><use href="#plus" width="9" height="9"/></svg>
<svg style="position:absolute;left:56px;top:674px" width="18" height="16"><use href="#pfolder" width="18" height="16"/></svg>
<div style="left:77px;top:676.0px;height:14px;line-height:14px;font-size:11px;font-weight:normal;color:#000;">Internal</div>
<div style="left:51px;top:700px;width:6px;height:1px;background:repeating-linear-gradient(90deg,#A0A0A0 0 1px,transparent 1px 2px);"></div>
<svg style="position:absolute;left:42px;top:696px" width="9" height="9"><use href="#minus" width="9" height="9"/></svg>
<svg style="position:absolute;left:56px;top:691px" width="18" height="16"><use href="#pfolder" width="18" height="16"/></svg>
<div style="left:77px;top:693.0px;height:14px;line-height:14px;font-size:11px;font-weight:normal;color:#000;">SICS</div>
<div style="left:70px;top:717px;width:6px;height:1px;background:repeating-linear-gradient(90deg,#A0A0A0 0 1px,transparent 1px 2px);"></div>
<svg style="position:absolute;left:61px;top:713px" width="9" height="9"><use href="#plus" width="9" height="9"/></svg>
<svg style="position:absolute;left:76px;top:710px" width="16" height="14"><use href="#folder" width="16" height="14"/></svg>
<div style="left:96px;top:710.0px;height:14px;line-height:14px;font-size:11px;font-weight:normal;color:#000;">12Tmagnet</div>
<div style="left:70px;top:734px;width:6px;height:1px;background:repeating-linear-gradient(90deg,#A0A0A0 0 1px,transparent 1px 2px);"></div>
<svg style="position:absolute;left:61px;top:730px" width="9" height="9"><use href="#plus" width="9" height="9"/></svg>
<svg style="position:absolute;left:76px;top:727px" width="16" height="14"><use href="#folder" width="16" height="14"/></svg>
<div style="left:96px;top:727.0px;height:14px;line-height:14px;font-size:11px;font-weight:normal;color:#000;">alignment checks</div>
<div style="left:70px;top:751px;width:6px;height:1px;background:repeating-linear-gradient(90deg,#A0A0A0 0 1px,transparent 1px 2px);"></div>
<svg style="position:absolute;left:61px;top:747px" width="9" height="9"><use href="#plus" width="9" height="9"/></svg>
<svg style="position:absolute;left:76px;top:744px" width="16" height="14"><use href="#folder" width="16" height="14"/></svg>
<div style="left:96px;top:744.0px;height:14px;line-height:14px;font-size:11px;font-weight:normal;color:#000;">Bob 2012</div>
<div style="left:70px;top:768px;width:6px;height:1px;background:repeating-linear-gradient(90deg,#A0A0A0 0 1px,transparent 1px 2px);"></div>
<svg style="position:absolute;left:61px;top:764px" width="9" height="9"><use href="#plus" width="9" height="9"/></svg>
<svg style="position:absolute;left:76px;top:761px" width="16" height="14"><use href="#folder" width="16" height="14"/></svg>
<div style="left:96px;top:761.0px;height:14px;line-height:14px;font-size:11px;font-weight:normal;color:#000;">NBT</div>
<div style="left:70px;top:785px;width:6px;height:1px;background:repeating-linear-gradient(90deg,#A0A0A0 0 1px,transparent 1px 2px);"></div>
<svg style="position:absolute;left:61px;top:781px" width="9" height="9"><use href="#plus" width="9" height="9"/></svg>
<svg style="position:absolute;left:76px;top:778px" width="16" height="14"><use href="#folder" width="16" height="14"/></svg>
<div style="left:96px;top:778.0px;height:14px;line-height:14px;font-size:11px;font-weight:normal;color:#000;">old batch files</div>
<div style="left:70px;top:802px;width:6px;height:1px;background:repeating-linear-gradient(90deg,#A0A0A0 0 1px,transparent 1px 2px);"></div>
<svg style="position:absolute;left:61px;top:798px" width="9" height="9"><use href="#plus" width="9" height="9"/></svg>
<svg style="position:absolute;left:76px;top:795px" width="16" height="14"><use href="#folder" width="16" height="14"/></svg>
<div style="left:96px;top:795.0px;height:14px;line-height:14px;font-size:11px;font-weight:normal;color:#000;">P2202</div>
<div style="left:70px;top:819px;width:6px;height:1px;background:repeating-linear-gradient(90deg,#A0A0A0 0 1px,transparent 1px 2px);"></div>
<svg style="position:absolute;left:61px;top:815px" width="9" height="9"><use href="#minus" width="9" height="9"/></svg>
<svg style="position:absolute;left:76px;top:812px" width="16" height="14"><use href="#folder" width="16" height="14"/></svg>
<div style="left:96px;top:812.0px;height:14px;line-height:14px;font-size:11px;font-weight:normal;color:#000;">P2564Venter</div>
<div style="left:85px;top:836px;width:10px;height:1px;background:repeating-linear-gradient(90deg,#A0A0A0 0 1px,transparent 1px 2px);"></div>
<svg style="position:absolute;left:95px;top:828px" width="16" height="16"><use href="#tcl" width="16" height="16"/></svg>
<div style="left:115px;top:829.0px;height:14px;line-height:14px;font-size:11px;font-weight:normal;color:#000;">24-9-12_1.tcl</div>
<div style="left:85px;top:853px;width:10px;height:1px;background:repeating-linear-gradient(90deg,#A0A0A0 0 1px,transparent 1px 2px);"></div>
<svg style="position:absolute;left:95px;top:845px" width="16" height="16"><use href="#tcl" width="16" height="16"/></svg>
<div style="left:115px;top:846.0px;height:14px;line-height:14px;font-size:11px;font-weight:normal;color:#000;">24-9-12_2.tcl</div>
<div style="left:85px;top:870px;width:10px;height:1px;background:repeating-linear-gradient(90deg,#A0A0A0 0 1px,transparent 1px 2px);"></div>
<svg style="position:absolute;left:95px;top:862px" width="16" height="16"><use href="#tcl" width="16" height="16"/></svg>
<div style="left:115px;top:863.0px;height:14px;line-height:14px;font-size:11px;font-weight:normal;color:#000;">25-9-12_1.tcl</div>
<div style="left:85px;top:887px;width:10px;height:1px;background:repeating-linear-gradient(90deg,#A0A0A0 0 1px,transparent 1px 2px);"></div>
<svg style="position:absolute;left:95px;top:879px" width="16" height="16"><use href="#tcl" width="16" height="16"/></svg>
<div style="left:115px;top:880.0px;height:14px;line-height:14px;font-size:11px;font-weight:normal;color:#000;">25-9-12_2.tcl</div>
<div style="left:85px;top:904px;width:10px;height:1px;background:repeating-linear-gradient(90deg,#A0A0A0 0 1px,transparent 1px 2px);"></div>
<svg style="position:absolute;left:95px;top:896px" width="16" height="16"><use href="#tcl" width="16" height="16"/></svg>
<div style="left:115px;top:897.0px;height:14px;line-height:14px;font-size:11px;font-weight:normal;color:#000;">26-9-12_1.tcl</div>
<div style="left:85px;top:921px;width:10px;height:1px;background:repeating-linear-gradient(90deg,#A0A0A0 0 1px,transparent 1px 2px);"></div>
<svg style="position:absolute;left:95px;top:913px" width="16" height="16"><use href="#tcl" width="16" height="16"/></svg>
<div style="left:115px;top:914.0px;height:14px;line-height:14px;font-size:11px;font-weight:normal;color:#000;">27-9-12_1.tcl</div>
<div style="left:85px;top:938px;width:10px;height:1px;background:repeating-linear-gradient(90deg,#A0A0A0 0 1px,transparent 1px 2px);"></div>
<svg style="position:absolute;left:95px;top:930px" width="16" height="16"><use href="#tcl" width="16" height="16"/></svg>
<div style="left:115px;top:931.0px;height:14px;line-height:14px;font-size:11px;font-weight:normal;color:#000;">27-9-12_2.tcl</div>
<div style="left:85px;top:955px;width:10px;height:1px;background:repeating-linear-gradient(90deg,#A0A0A0 0 1px,transparent 1px 2px);"></div>
<svg style="position:absolute;left:95px;top:947px" width="16" height="16"><use href="#tcl" width="16" height="16"/></svg>
<div style="left:115px;top:948.0px;height:14px;line-height:14px;font-size:11px;font-weight:normal;color:#000;">28-9-12_1.tcl</div>
<div style="left:85px;top:972px;width:10px;height:1px;background:repeating-linear-gradient(90deg,#A0A0A0 0 1px,transparent 1px 2px);"></div>
<div style="left:113px;top:964px;width:73px;height:17px;background:#D4D0C8;"></div>
<svg style="position:absolute;left:95px;top:964px" width="16" height="16"><use href="#tcl" width="16" height="16"/></svg>
<div style="left:115px;top:965.0px;height:14px;line-height:14px;font-size:11px;font-weight:normal;color:#000;">28-9-12_2.tcl</div>
<div style="left:85px;top:989px;width:10px;height:1px;background:repeating-linear-gradient(90deg,#A0A0A0 0 1px,transparent 1px 2px);"></div>
<svg style="position:absolute;left:95px;top:981px" width="16" height="16"><use href="#tcl" width="16" height="16"/></svg>
<div style="left:115px;top:982.0px;height:14px;line-height:14px;font-size:11px;font-weight:normal;color:#000;">28-9-12_3.tcl</div>
<div style="left:342px;top:639px;width:15px;height:358px;background:repeating-conic-gradient(#F4F3EF 0% 25%, #DCD9D1 0% 50%) 0 0/2px 2px;"></div>
<div style="left:342px;top:639px;width:15px;height:16px;background:#D4D0C8;border:1px solid;border-color:#D4D0C8 #404040 #404040 #D4D0C8;box-shadow:inset 1px 1px #fff,inset -1px -1px #808080;"></div>
<svg style="position:absolute;left:342px;top:639px" width="15" height="15"><use href="#sarrowU" width="15" height="15"/></svg>
<div style="left:342px;top:655px;width:15px;height:273px;background:#D4D0C8;border:1px solid;border-color:#D4D0C8 #404040 #404040 #D4D0C8;box-shadow:inset 1px 1px #fff,inset -1px -1px #808080;"></div>
<div style="left:342px;top:981px;width:15px;height:16px;background:#D4D0C8;border:1px solid;border-color:#D4D0C8 #404040 #404040 #D4D0C8;box-shadow:inset 1px 1px #fff,inset -1px -1px #808080;"></div>
<svg style="position:absolute;left:342px;top:981px" width="15" height="15"><use href="#sarrowD" width="15" height="15"/></svg>
<div style="left:363px;top:614px;width:667px;height:386px;border:1px solid #9C9C9C;border-radius:6px 6px 0 0;background:#D4D0C8;"></div>
<svg style="position:absolute;left:364px;top:615px" width="112" height="23"><defs><linearGradient id="ttab" x1="0" y1="0" x2="0" y2="1"><stop offset="0" stop-color="#F6F5F2"/><stop offset="1" stop-color="#D4D0C8"/></linearGradient></defs><path d="M0.5 23 V6 Q0.5 0.5 6 0.5 H76 C93.0 0.5 93.0 22 110 22 V23Z" fill="url(#ttab)" stroke="#9C9C9C" stroke-width="1"/></svg>
<div style="left:369px;top:621px;width:13px;height:10px;background:linear-gradient(#606060,#202020);"></div>
<div style="left:371px;top:621.5px;height:9px;line-height:9px;font-size:7px;font-weight:bold;color:#E0E0E0;">&gt;_</div>
<div style="left:386px;top:620.0px;height:14px;line-height:14px;font-size:11px;font-weight:normal;color:#000;">Sics Terminal</div>
<div style="left:1008px;top:619.0px;height:16px;line-height:16px;font-size:14px;font-weight:bold;color:#000;font-family:'Liberation Serif',serif;">B</div>
<div style="left:364px;top:637px;width:665px;height:1px;background:#9C9C9C;"></div>
<div style="left:371px;top:653px;width:651px;height:279px;border:1px solid #A0A0A0;box-shadow:inset 1px 1px #fff;"></div>
<div style="left:377px;top:646px;height:14px;line-height:14px;font-size:11px;padding:0 2px;background:#D4D0C8;">Terminal</div>
<div style="left:373px;top:659px;width:631px;height:254px;background:#fff;"></div>
<div style="left:373px;top:659px;width:631px;height:254px;">
<div style="left:0px;top:-6px;height:14px;line-height:14px;font-size:11px;color:#16168E;">New ql position:</div>
<div style="left:92px;top:-6px;height:14px;line-height:14px;font-size:11px;color:#16168E;">1.000</div>
<div style="left:0px;top:7px;height:14px;line-height:14px;font-size:11px;color:#16168E;">New en position:</div>
<div style="left:92px;top:7px;height:14px;line-height:14px;font-size:11px;color:#16168E;">-0.003</div>
<div style="left:0px;top:20px;height:14px;line-height:14px;font-size:11px;color:#16168E;">Driving finished sucessfully</div>
<div style="left:0px;top:46px;height:14px;line-height:14px;font-size:11px;color:#000;"><span style="letter-spacing:1.6px">&gt;&gt;</span> <b style="color:#7A0000">qh</b></div>
<div style="left:0px;top:72px;height:14px;line-height:14px;font-size:11px;color:#16168E;">qh = -0.000002</div>
<div style="left:0px;top:98px;height:14px;line-height:14px;font-size:11px;color:#000;"><span style="letter-spacing:1.6px">&gt;&gt;</span> <b style="color:#7A0000">qk</b></div>
<div style="left:0px;top:124px;height:14px;line-height:14px;font-size:11px;color:#16168E;">qk = -0.000420</div>
<div style="left:0px;top:150px;height:14px;line-height:14px;font-size:11px;color:#000;"><span style="letter-spacing:1.6px">&gt;&gt;</span> <b style="color:#7A0000">ql</b></div>
<div style="left:0px;top:176px;height:14px;line-height:14px;font-size:11px;color:#16168E;">ql = 0.863833</div>
<div style="left:0px;top:202px;height:14px;line-height:14px;font-size:11px;color:#000;"><span style="letter-spacing:1.6px">&gt;&gt;</span> <b style="color:#7A0000">en</b></div>
<div style="left:0px;top:228px;height:14px;line-height:14px;font-size:11px;color:#16168E;">en = -0.008239</div>
</div>
<div style="left:1004px;top:659px;width:16px;height:254px;background:repeating-conic-gradient(#F4F3EF 0% 25%, #DCD9D1 0% 50%) 0 0/2px 2px;"></div>
<div style="left:1004px;top:660px;width:15px;height:15px;background:#D4D0C8;border:1px solid;border-color:#D4D0C8 #404040 #404040 #D4D0C8;box-shadow:inset 1px 1px #fff,inset -1px -1px #808080;"></div>
<svg style="position:absolute;left:1004px;top:660px" width="15" height="15"><use href="#sarrowU" width="15" height="15"/></svg>
<div style="left:1004px;top:897px;width:15px;height:15px;background:#D4D0C8;border:1px solid;border-color:#D4D0C8 #404040 #404040 #D4D0C8;"></div>
<div style="left:1004px;top:897px;width:15px;height:16px;background:#D4D0C8;border:1px solid;border-color:#D4D0C8 #404040 #404040 #D4D0C8;box-shadow:inset 1px 1px #fff,inset -1px -1px #808080;"></div>
<svg style="position:absolute;left:1004px;top:897px" width="15" height="15"><use href="#sarrowD" width="15" height="15"/></svg>
<div style="left:1004px;top:890px;width:15px;height:7px;background:#D4D0C8;border:1px solid;border-color:#D4D0C8 #404040 #404040 #D4D0C8;box-shadow:inset 1px 1px #fff;"></div>
<div style="left:373px;top:913px;width:631px;height:16px;background:repeating-conic-gradient(#F4F3EF 0% 25%, #DCD9D1 0% 50%) 0 0/2px 2px;"></div>
<div style="left:374px;top:913px;width:15px;height:16px;background:#D4D0C8;border:1px solid;border-color:#D4D0C8 #404040 #404040 #D4D0C8;box-shadow:inset 1px 1px #fff,inset -1px -1px #808080;"></div>
<svg style="position:absolute;left:374px;top:913px" width="15" height="15"><use href="#sarrowL" width="15" height="15"/></svg>
<div style="left:375px;top:914px;width:13px;height:14px;background:rgba(212,208,200,0.55);"></div>
<div style="left:988px;top:913px;width:15px;height:16px;background:#D4D0C8;border:1px solid;border-color:#D4D0C8 #404040 #404040 #D4D0C8;box-shadow:inset 1px 1px #fff,inset -1px -1px #808080;"></div>
<svg style="position:absolute;left:988px;top:913px" width="15" height="15"><use href="#sarrowR" width="15" height="15"/></svg>
<div style="left:989px;top:914px;width:13px;height:14px;background:rgba(212,208,200,0.55);"></div>
<div style="left:1004px;top:913px;width:16px;height:16px;background:#D4D0C8;"></div>
<div style="left:371px;top:945px;width:651px;height:46px;border:1px solid #A0A0A0;box-shadow:inset 1px 1px #fff;"></div>
<div style="left:377px;top:938px;height:14px;line-height:14px;font-size:11px;padding:0 2px;background:#D4D0C8;">Input</div>
<div style="left:373px;top:951.0px;height:14px;line-height:14px;font-size:11px;font-weight:normal;color:#000;letter-spacing:-0.1px;">Press Ctrl+Space to trigger command history</div>
<div style="left:374px;top:971px;width:646px;height:17px;background:#fff;border:2px solid;border-color:#404040 #fff #fff #404040;box-shadow:inset 1px 1px #808080;"></div>
<div style="left:1280px;top:0px;width:1280px;height:994px;background:#004E98;"></div>
<svg width="0" height="0" style="position:absolute"><defs>
<symbol id="plot" viewBox="0 0 32 32"><rect x="3" y="3" width="28" height="28" fill="#000"/><rect x="1" y="1" width="28" height="27" fill="#fff" stroke="#202020" stroke-width="1"/><rect x="4" y="4" width="22" height="19" fill="#22D8E0" stroke="#202020" stroke-width="0.8"/><path d="M6 11 L9 9 L11 10 L13 7 L15 9 L17 6 L19 8 L21 7 L24 9" stroke="#000" stroke-width="1" fill="none"/><line x1="4" y1="13" x2="26" y2="13" stroke="#C03060" stroke-width="0.8"/><path d="M5 21 Q10 17 14 17 Q20 16 25 15" stroke="#C040C0" stroke-width="1.2" fill="none"/><path d="M5 20 Q10 16 14 15 Q20 14 25 13" stroke="#8080F0" stroke-width="1" fill="none"/><path d="M3 25 H28" stroke="#000" stroke-dasharray="1 2"/><circle cx="3" cy="23" r="1.5" fill="#E02020"/></symbol>
<symbol id="word" viewBox="0 0 32 32"><path d="M6 2 H22 L29 9 V30 H6Z" fill="#F4F8FC" stroke="#8CA0C0"/><path d="M22 2 V9 H29" fill="#D8E4F0" stroke="#8CA0C0"/><path d="M10 14H26M10 17H26M10 20H26M10 23H26M10 26H24" stroke="#A0B0C8"/><rect x="2" y="6" width="14" height="13" fill="#2A5CC8" stroke="#fff"/><text x="9" y="17" font-size="11" font-weight="bold" fill="#fff" text-anchor="middle" font-family="Liberation Serif">W</text></symbol>
<symbol id="ppt" viewBox="0 0 32 32"><path d="M6 2 H22 L29 9 V30 H6Z" fill="#F8F8FC" stroke="#A0A0B0"/><path d="M10 14H26M10 17H26M10 20H26M10 23H26" stroke="#B0B8C8"/><rect x="2" y="4" width="14" height="14" fill="#E86A30" stroke="#fff"/><text x="9" y="15" font-size="11" font-weight="bold" fill="#fff" text-anchor="middle" font-family="Liberation Sans">P</text></symbol>
<symbol id="xls" viewBox="0 0 32 32"><path d="M6 2 H22 L29 9 V30 H6Z" fill="#F4F8FC" stroke="#8CA0C0"/><rect x="12" y="14" width="14" height="12" fill="none" stroke="#8CA0C0"/><path d="M12 18H26M12 22H26M17 14V26M22 14V26" stroke="#8CA0C0"/><rect x="2" y="4" width="14" height="14" fill="#2E9A3A" stroke="#fff"/><text x="9" y="15" font-size="11" font-weight="bold" fill="#fff" text-anchor="middle" font-family="Liberation Sans">X</text></symbol>
<symbol id="shortcut" viewBox="0 0 10 10"><rect x="0.5" y="0.5" width="9" height="9" fill="#fff" stroke="#808080"/><path d="M3 8 V5 Q3 3 5 3 H7" stroke="#000" stroke-width="1.5" fill="none"/><path d="M6 1 L8.5 3 L6 5Z" fill="#000"/></symbol>
</defs></svg>
<svg style="position:absolute;left:1301px;top:2px;" width="32" height="32" viewBox="0 0 32 32"><circle cx="17" cy="17" r="11" fill="#3A8EE8"/><circle cx="17" cy="17" r="6" fill="#fff"/><rect x="10" y="16" width="14" height="3" fill="#3A8EE8"/><rect x="17" y="19" width="9" height="4" fill="#fff"/><path d="M4 28 Q2 22 10 12 Q20 2 28 3 Q32 5 27 12" stroke="#F0B030" stroke-width="2.5" fill="none"/></svg>
<div style="left:1267px;top:39px;width:100px;height:16px;line-height:16px;font-size:12px;color:#fff;text-align:center;text-shadow:1px 1px #0A2250;">Internet</div>
<div style="left:1267px;top:55px;width:100px;height:16px;line-height:16px;font-size:12px;color:#fff;text-align:center;text-shadow:1px 1px #0A2250;">Explorer</div>
<svg style="position:absolute;left:1301px;top:80px;" width="32" height="32" viewBox="0 0 32 32"><path d="M5 6 L8 29 H24 L27 6Z" fill="#D8ECF8" stroke="#7AA8C8"/><ellipse cx="16" cy="6" rx="11" ry="3" fill="#B8D8F0" stroke="#7AA8C8"/><path d="M11 17 Q16 10 21 15" stroke="#30B030" stroke-width="3" fill="none"/><path d="M21 19 Q16 26 11 21" stroke="#30B030" stroke-width="3" fill="none"/><path d="M12 5 L18 2 L20 6" fill="#F0F0E0" stroke="#A0A090"/></svg>
<div style="left:1267px;top:117px;width:100px;height:16px;line-height:16px;font-size:12px;color:#fff;text-align:center;text-shadow:1px 1px #0A2250;">Recycle Bin</div>
<svg style="position:absolute;left:1301px;top:158px;" width="32" height="32" viewBox="0 0 32 32"><rect x="2" y="3" width="28" height="26" rx="3" fill="#F6B840" stroke="#D08010"/><rect x="12" y="12" width="17" height="14" fill="#FCE8B0" stroke="#D09030"/><circle cx="11" cy="13" r="7" fill="#F09010" stroke="#fff" stroke-width="2.5"/><circle cx="23" cy="19" r="4" fill="#fff" stroke="#C08020"/></svg>
<div style="left:1267px;top:195px;width:100px;height:16px;line-height:16px;font-size:12px;color:#fff;text-align:center;text-shadow:1px 1px #0A2250;">Microsoft</div>
<div style="left:1267px;top:211px;width:100px;height:16px;line-height:16px;font-size:12px;color:#fff;text-align:center;text-shadow:1px 1px #0A2250;">Outlook</div>
<svg style="position:absolute;left:1301px;top:236px;" width="32" height="32" viewBox="0 0 32 32"><circle cx="11" cy="10" r="6" fill="#E8B888"/><path d="M5 8 Q11 0 17 7" fill="#402010"/><circle cx="20" cy="9" r="5" fill="#D8A878"/><path d="M15 6 Q20 1 25 6" fill="#302010"/><path d="M3 26 Q4 16 11 16 Q18 16 19 26Z" fill="#303030"/><circle cx="25" cy="22" r="4" fill="none" stroke="#E8C020" stroke-width="2.5"/><path d="M22 24 L13 30" stroke="#E8C020" stroke-width="2.5"/></svg>
<svg style="position:absolute;left:1301px;top:258px" width="10" height="10"><use href="#shortcut" width="10" height="10"/></svg>
<div style="left:1267px;top:273px;width:100px;height:16px;line-height:16px;font-size:12px;color:#fff;text-align:center;text-shadow:1px 1px #0A2250;">ANSTO</div>
<div style="left:1267px;top:289px;width:100px;height:16px;line-height:16px;font-size:12px;color:#fff;text-align:center;text-shadow:1px 1px #0A2250;">Trust...</div>
<svg style="position:absolute;left:1301px;top:314px;" width="32" height="32" viewBox="0 0 32 32"><rect x="0" y="0" width="32" height="32" fill="#3C78C8"/><rect x="2" y="2" width="28" height="28" fill="none" stroke="#90B8E8"/><text x="16" y="19" font-size="11" fill="#fff" text-anchor="middle" font-family="Liberation Serif" font-weight="bold">DAVE</text></svg>
<svg style="position:absolute;left:1301px;top:336px" width="10" height="10"><use href="#shortcut" width="10" height="10"/></svg>
<div style="left:1267px;top:351px;width:100px;height:16px;line-height:16px;font-size:12px;color:#fff;text-align:center;text-shadow:1px 1px #0A2250;">DAVE</div>
<svg style="position:absolute;left:1301px;top:392px;" width="32" height="32" viewBox="0 0 32 32"><ellipse cx="16" cy="18" rx="12" ry="7" fill="#6C6458"/><circle cx="6" cy="18" r="4" fill="#202020"/><circle cx="13" cy="14" r="3" fill="#fff"/><circle cx="19" cy="14" r="3" fill="#fff"/><path d="M24 12 L30 6 L27 16Z" fill="#6C6458"/><path d="M24 22 L30 28" stroke="#C0C0C0" stroke-width="1.5"/></svg>
<svg style="position:absolute;left:1301px;top:414px" width="10" height="10"><use href="#shortcut" width="10" height="10"/></svg>
<div style="left:1267px;top:429px;width:100px;height:16px;line-height:16px;font-size:12px;color:#fff;text-align:center;text-shadow:1px 1px #0A2250;">GIMP 2</div>
<svg style="position:absolute;left:1301px;top:470px;" width="32" height="32" viewBox="0 0 32 32"><path d="M4 2 H22 L28 8 V30 H4Z" fill="#fff" stroke="#909090"/><rect x="8" y="10" width="16" height="12" fill="#fff" stroke="#4050A0"/><rect x="8" y="10" width="16" height="3" fill="#4050A0"/><circle cx="11" cy="17" r="1.5" fill="#E04040"/><circle cx="16" cy="17" r="1.5" fill="#40A040"/><circle cx="21" cy="17" r="1.5" fill="#4040E0"/></svg>
<svg style="position:absolute;left:1301px;top:492px" width="10" height="10"><use href="#shortcut" width="10" height="10"/></svg>
<div style="left:1267px;top:507px;width:100px;height:16px;line-height:16px;font-size:12px;color:#fff;text-align:center;text-shadow:1px 1px #0A2250;">Lamp</div>
<svg style="position:absolute;left:1301px;top:548px;" width="32" height="32" viewBox="0 0 32 32"><circle cx="17" cy="15" r="12" fill="#3C6AC8"/><circle cx="19" cy="12" r="7" fill="#6CA0E8"/><path d="M3 16 Q3 30 17 30 Q29 30 30 18 Q26 26 16 24 Q7 22 8 12 Q4 10 6 4 Q2 8 3 16Z" fill="#E8801C"/></svg>
<svg style="position:absolute;left:1301px;top:570px" width="10" height="10"><use href="#shortcut" width="10" height="10"/></svg>
<div style="left:1267px;top:585px;width:100px;height:16px;line-height:16px;font-size:12px;color:#fff;text-align:center;text-shadow:1px 1px #0A2250;">Mozilla</div>
<div style="left:1267px;top:601px;width:100px;height:16px;line-height:16px;font-size:12px;color:#fff;text-align:center;text-shadow:1px 1px #0A2250;">Firefox</div>
<svg style="position:absolute;left:1301px;top:626px;" width="32" height="32" viewBox="0 0 32 32"><rect x="2" y="8" width="16" height="14" fill="#101010" stroke="#A0A0A0"/><rect x="12" y="2" width="16" height="14" fill="#101010" stroke="#A0A0A0"/><circle cx="22" cy="24" r="7" fill="#2060C0"/><path d="M17 22 Q20 18 24 20 Q28 22 27 27 Q22 30 18 27Z" fill="#30B030"/></svg>
<svg style="position:absolute;left:1301px;top:648px" width="10" height="10"><use href="#shortcut" width="10" height="10"/></svg>
<div style="left:1267px;top:663px;width:100px;height:16px;line-height:16px;font-size:12px;color:#fff;text-align:center;text-shadow:1px 1px #0A2250;">OpenVPN</div>
<div style="left:1267px;top:679px;width:100px;height:16px;line-height:16px;font-size:12px;color:#fff;text-align:center;text-shadow:1px 1px #0A2250;">GUI</div>
<svg style="position:absolute;left:1301px;top:704px" width="32" height="32"><use href="#word" width="32" height="32"/></svg>
<div style="left:1267px;top:741px;width:100px;height:16px;line-height:16px;font-size:12px;color:#fff;text-align:center;text-shadow:1px 1px #0A2250;">Commissi...</div>
<svg style="position:absolute;left:1301px;top:782px" width="32" height="32"><use href="#word" width="32" height="32"/></svg>
<div style="left:1267px;top:819px;width:100px;height:16px;line-height:16px;font-size:12px;color:#fff;text-align:center;text-shadow:1px 1px #0A2250;">Commissi...</div>
<svg style="position:absolute;left:1301px;top:860px" width="32" height="32"><use href="#plot" width="32" height="32"/></svg>
<div style="left:1267px;top:897px;width:100px;height:16px;line-height:16px;font-size:12px;color:#fff;text-align:center;text-shadow:1px 1px #0A2250;">EiScans_J...</div>
<svg style="position:absolute;left:1376px;top:2px" width="32" height="32"><use href="#plot" width="32" height="32"/></svg>
<div style="left:1342px;top:39px;width:100px;height:16px;line-height:16px;font-size:12px;color:#fff;text-align:center;text-shadow:1px 1px #0A2250;">EiScansJu...</div>
<svg style="position:absolute;left:1376px;top:80px;" width="32" height="32" viewBox="0 0 32 32"><path d="M2 6 H12 L14 9 H30 V28 H2Z" fill="#F2DE90" stroke="#B09040"/><rect x="2" y="10" width="28" height="18" fill="#F8E8A8" stroke="#B09040"/><rect x="10" y="3" width="4" height="25" fill="#808080"/><path d="M10 6H14M10 10H14M10 14H14M10 18H14M10 22H14" stroke="#fff"/></svg>
<div style="left:1342px;top:117px;width:100px;height:16px;line-height:16px;font-size:12px;color:#fff;text-align:center;text-shadow:1px 1px #0A2250;">FluxInfor...</div>
<svg style="position:absolute;left:1376px;top:158px" width="32" height="32"><use href="#plot" width="32" height="32"/></svg>
<div style="left:1342px;top:195px;width:100px;height:16px;line-height:16px;font-size:12px;color:#fff;text-align:center;text-shadow:1px 1px #0A2250;">PowderSc...</div>
<svg style="position:absolute;left:1376px;top:236px;" width="32" height="32" viewBox="0 0 32 32"><rect x="14" y="2" width="14" height="11" fill="#2040C0" stroke="#C0C0C0" stroke-width="2"/><rect x="14" y="14" width="15" height="3" fill="#C0C0C0"/><rect x="3" y="16" width="14" height="11" fill="#2040C0" stroke="#C0C0C0" stroke-width="2"/><rect x="2" y="28" width="16" height="3" fill="#C0C0C0"/><path d="M20 8 L11 18 L16 17 L9 26" stroke="#F0E020" stroke-width="2.5" fill="none"/></svg>
<div style="left:1342px;top:273px;width:100px;height:16px;line-height:16px;font-size:12px;color:#fff;text-align:center;text-shadow:1px 1px #0A2250;">putty.exe</div>
<svg style="position:absolute;left:1376px;top:314px" width="32" height="32"><use href="#xls" width="32" height="32"/></svg>
<div style="left:1342px;top:351px;width:100px;height:16px;line-height:16px;font-size:12px;color:#fff;text-align:center;text-shadow:1px 1px #0A2250;">RunNumb...</div>
<svg style="position:absolute;left:1376px;top:392px" width="32" height="32"><use href="#plot" width="32" height="32"/></svg>
<div style="left:1342px;top:429px;width:100px;height:16px;line-height:16px;font-size:12px;color:#fff;text-align:center;text-shadow:1px 1px #0A2250;">S2powder...</div>
<svg style="position:absolute;left:1376px;top:470px;" width="32" height="32" viewBox="0 0 32 32"><circle cx="16" cy="16" r="13" fill="#28A8E8"/><circle cx="8" cy="8" r="6" fill="#28A8E8"/><circle cx="24" cy="24" r="6" fill="#28A8E8"/><text x="16" y="22" font-size="17" font-weight="bold" fill="#fff" text-anchor="middle" font-family="Liberation Sans">S</text></svg>
<svg style="position:absolute;left:1376px;top:492px" width="10" height="10"><use href="#shortcut" width="10" height="10"/></svg>
<div style="left:1342px;top:507px;width:100px;height:16px;line-height:16px;font-size:12px;color:#fff;text-align:center;text-shadow:1px 1px #0A2250;">Shortcut to</div>
<div style="left:1342px;top:523px;width:100px;height:16px;line-height:16px;font-size:12px;color:#fff;text-align:center;text-shadow:1px 1px #0A2250;">Skype.exe</div>
<svg style="position:absolute;left:1376px;top:548px;" width="32" height="32" viewBox="0 0 32 32"><rect x="1" y="1" width="30" height="30" fill="#fff" stroke="#404040"/><path d="M4 24 L9 24 L11 18 L13 24 L15 8 L17 24 L19 14 L21 24 L28 24" stroke="#E02020" stroke-width="1.2" fill="none"/><rect x="10" y="24" width="20" height="6" fill="#E02020"/><text x="20" y="29.5" font-size="5.5" font-weight="bold" fill="#fff" text-anchor="middle" font-family="Liberation Sans">PLOTR</text></svg>
<svg style="position:absolute;left:1376px;top:570px" width="10" height="10"><use href="#shortcut" width="10" height="10"/></svg>
<div style="left:1342px;top:585px;width:100px;height:16px;line-height:16px;font-size:12px;color:#fff;text-align:center;text-shadow:1px 1px #0A2250;">Shortcut to</div>
<div style="left:1342px;top:601px;width:100px;height:16px;line-height:16px;font-size:12px;color:#fff;text-align:center;text-shadow:1px 1px #0A2250;">winplotr.exe</div>
<svg style="position:absolute;left:1376px;top:626px" width="32" height="32"><use href="#plot" width="32" height="32"/></svg>
<div style="left:1342px;top:663px;width:100px;height:16px;line-height:16px;font-size:12px;color:#fff;text-align:center;text-shadow:1px 1px #0A2250;">Translatin...</div>
<svg style="position:absolute;left:1376px;top:704px;" width="32" height="32" viewBox="0 0 32 32"><rect x="0" y="0" width="32" height="32" rx="2" fill="#fff" stroke="#C0C0C0"/><path d="M3 5 L9 28 L15 5" stroke="#E02828" stroke-width="4" fill="none"/><path d="M18 14 V6 Q18 3 22 3 Q26 3 26 6 V14" stroke="#1858D8" stroke-width="3" fill="none"/><path d="M29 19 Q26 17 22 17 Q18 18 18 23 Q18 28 22 28 Q26 28 29 26" stroke="#1858D8" stroke-width="3" fill="none"/></svg>
<svg style="position:absolute;left:1376px;top:726px" width="10" height="10"><use href="#shortcut" width="10" height="10"/></svg>
<div style="left:1342px;top:741px;width:100px;height:16px;line-height:16px;font-size:12px;color:#fff;text-align:center;text-shadow:1px 1px #0A2250;">VNC Viewer</div>
<svg style="position:absolute;left:1376px;top:782px;" width="32" height="32" viewBox="0 0 32 32"><path d="M4 12 Q4 2 14 4 L12 0 L20 6 L12 12 L13 8 Q8 7 8 12Z" fill="#3A8AE8"/><rect x="9" y="13" width="16" height="13" rx="2" fill="#707070"/><path d="M12 13 V9 Q17 3 22 9 V13" stroke="#909090" stroke-width="2.5" fill="none"/><path d="M30 20 Q30 30 20 30 L22 32 L14 27 L22 22 L21 26 Q26 26 26 20Z" fill="#30B030"/></svg>
<svg style="position:absolute;left:1376px;top:804px" width="10" height="10"><use href="#shortcut" width="10" height="10"/></svg>
<div style="left:1342px;top:819px;width:100px;height:16px;line-height:16px;font-size:12px;color:#fff;text-align:center;text-shadow:1px 1px #0A2250;">WinSCP (2)</div>
<svg style="position:absolute;left:1376px;top:860px;" width="32" height="32" viewBox="0 0 32 32"><path d="M3 8 H12 L14 10 H28 V28 H3Z" fill="#E8C860" stroke="#B09040"/><path d="M3 28 L6 13 H31 L28 28Z" fill="#F8E098" stroke="#C0A050"/></svg>
<svg style="position:absolute;left:1376px;top:882px" width="10" height="10"><use href="#shortcut" width="10" height="10"/></svg>
<div style="left:1342px;top:897px;width:100px;height:16px;line-height:16px;font-size:12px;color:#fff;text-align:center;text-shadow:1px 1px #0A2250;">MviewMfit</div>
<div style="left:1342px;top:913px;width:100px;height:16px;line-height:16px;font-size:12px;color:#fff;text-align:center;text-shadow:1px 1px #0A2250;">Rescal</div>
<svg style="position:absolute;left:1451px;top:2px" width="32" height="32"><use href="#ppt" width="32" height="32"/></svg>
<div style="left:1417px;top:39px;width:100px;height:16px;line-height:16px;font-size:12px;color:#fff;text-align:center;text-shadow:1px 1px #0A2250;">ContourD...</div>
<svg style="position:absolute;left:1451px;top:80px" width="32" height="32"><use href="#word" width="32" height="32"/></svg>
<div style="left:1417px;top:117px;width:100px;height:16px;line-height:16px;font-size:12px;color:#fff;text-align:center;text-shadow:1px 1px #0A2250;">Taipan User</div>
<div style="left:1417px;top:133px;width:100px;height:16px;line-height:16px;font-size:12px;color:#fff;text-align:center;text-shadow:1px 1px #0A2250;">Manual_v...</div>
<svg style="position:absolute;left:1451px;top:158px;" width="32" height="32" viewBox="0 0 32 32"><rect x="0" y="0" width="32" height="32" fill="#2860C0"/><rect x="0" y="0" width="32" height="32" fill="url(#vtg)"/><defs><radialGradient id="vtg"><stop offset="0" stop-color="#6090E8"/><stop offset="1" stop-color="#1848A0"/></radialGradient></defs><text x="16" y="20" font-size="11" fill="#B0C8F8" text-anchor="middle" font-family="Liberation Sans" font-weight="bold">vTAS</text></svg>
<svg style="position:absolute;left:1451px;top:180px" width="10" height="10"><use href="#shortcut" width="10" height="10"/></svg>
<div style="left:1417px;top:195px;width:100px;height:16px;line-height:16px;font-size:12px;color:#fff;text-align:center;text-shadow:1px 1px #0A2250;">vTAS</div>
<svg style="position:absolute;left:1451px;top:236px" width="32" height="32"><use href="#plot" width="32" height="32"/></svg>
<div style="left:1417px;top:273px;width:100px;height:16px;line-height:16px;font-size:12px;color:#fff;text-align:center;text-shadow:1px 1px #0A2250;">VenterSa...</div>
<div style="left:1280px;top:994px;width:1280px;height:30px;background:linear-gradient(#3168D5 0px,#3A81F3 2px,#2A6CE8 5px,#245EDC 15px,#2058D8 27px,#1A4FC8 30px);"></div>
<div style="left:1280px;top:994px;width:1280px;height:1px;background:#4A8AF0;"></div>
<div style="left:1280px;top:995px;width:104px;height:29px;background:linear-gradient(#3C9A3C 0px,#5AB55A 4px,#3FA03F 10px,#378E37 24px,#2F7F2F 29px);border-radius:0 10px 10px 0;box-shadow:inset -2px 0 3px rgba(0,0,0,0.25);"></div>
<svg style="position:absolute;left:1290px;top:1000px;" width="20" height="19" viewBox="0 0 20 19"><path d="M1 3 Q5 1 9 3 V9 Q5 7 1 9Z" fill="#F05A28"/><path d="M10 3 Q14 5 19 3 V9 Q14 11 10 9Z" fill="#7CBB2A"/><path d="M1 10 Q5 8 9 10 V16 Q5 14 1 16Z" fill="#2A8AE0"/><path d="M10 10 Q14 12 19 10 V16 Q14 18 10 16Z" fill="#F8C020"/></svg>
<div style="left:1315.5px;top:998.0px;height:24px;line-height:24px;font-size:20px;font-weight:bold;color:#fff;font-style:italic;text-shadow:1px 1px 1px #1A3A1A;">start</div>
<svg style="position:absolute;left:1396px;top:1001px;" width="16" height="16" viewBox="0 0 16 16"><path d="M2 3 H12 L14 5 V14 H2Z" fill="#F0F8FF" stroke="#3060A0"/><path d="M5 9 L9 5 L11 7" stroke="#203040" stroke-width="1.5" fill="none"/><path d="M12 2 L15 4" stroke="#F08030" stroke-width="1.5"/></svg>
<svg style="position:absolute;left:1419px;top:1001px;" width="16" height="16" viewBox="0 0 16 16"><circle cx="9" cy="9" r="5.5" fill="#3A8EE8"/><circle cx="9" cy="9" r="2.5" fill="#fff"/><rect x="6" y="8" width="7" height="1.5" fill="#3A8EE8"/><path d="M2 15 Q1 10 6 5 Q12 0 15 1.5 Q16 3 13 6" stroke="#F0B030" stroke-width="1.5" fill="none"/></svg>
<svg style="position:absolute;left:1441px;top:1001px;" width="17" height="16" viewBox="0 0 17 16"><path d="M1 3 H6 L7.5 5 H15 V14 H1Z" fill="#F6D870" stroke="#A08020"/><circle cx="8" cy="9" r="3" fill="#B8E0F8" stroke="#5090C0"/><path d="M12 6 L16 14 H8Z" fill="#E85030" opacity="0.7"/></svg>
<svg style="position:absolute;left:1465px;top:1001px;" width="16" height="16" viewBox="0 0 16 16"><rect x="1" y="1" width="14" height="14" fill="#E8F4E0" stroke="#fff" stroke-width="1"/><text x="8" y="12.5" font-size="11" font-weight="bold" fill="#2E8A30" text-anchor="middle" font-family="Liberation Sans">X</text></svg>
<svg style="position:absolute;left:1488px;top:1001px;" width="16" height="16" viewBox="0 0 16 16"><rect x="1" y="1" width="14" height="14" fill="#F8C040" stroke="#FCE8A0" stroke-width="1"/><text x="8" y="12.5" font-size="11" font-weight="bold" fill="#B86010" text-anchor="middle" font-family="Liberation Sans">O</text></svg>
<svg style="position:absolute;left:1511px;top:1001px;" width="16" height="16" viewBox="0 0 16 16"><rect x="1" y="1" width="14" height="14" fill="#F8D8C8" stroke="#fff" stroke-width="1"/><text x="8" y="12.5" font-size="11" font-weight="bold" fill="#D84818" text-anchor="middle" font-family="Liberation Sans">P</text></svg>
<svg style="position:absolute;left:1534px;top:1001px;" width="16" height="16" viewBox="0 0 16 16"><rect x="1" y="1" width="14" height="14" fill="#F0F4FC" stroke="#fff" stroke-width="1"/><text x="8" y="12.5" font-size="11" font-weight="bold" fill="#2A5CC8" text-anchor="middle" font-family="Liberation Sans">W</text></svg>
<svg style="position:absolute;left:1557px;top:1001px;" width="16" height="16" viewBox="0 0 16 16"><rect x="1" y="1" width="14" height="14" fill="#102050"/><path d="M3 13 L6 6 L9 9 L13 3 L14 12Z" fill="#F8C820"/></svg>
<svg style="position:absolute;left:1580px;top:1001px;" width="16" height="16" viewBox="0 0 16 16"><rect x="1" y="1" width="14" height="14" fill="#F8C040" stroke="#FCE8A0" stroke-width="1"/><text x="8" y="12.5" font-size="11" font-weight="bold" fill="#B86010" text-anchor="middle" font-family="Liberation Sans">O</text></svg>
<div style="left:1628px;top:997px;width:82px;height:27px;background:linear-gradient(#4C92F8 0px,#3C84F4 3px,#3A80F2 20px,#3478EC 27px);border-radius:3px 3px 0 0;box-shadow:inset 1px 1px rgba(255,255,255,0.25),inset -1px 0 rgba(0,0,0,0.2);"></div>
<svg style="position:absolute;left:1637px;top:1002px;" width="16" height="16" viewBox="0 0 16 16"><circle cx="8" cy="8" r="7" fill="#E8701C"/><circle cx="9" cy="7" r="4" fill="#3C6AC8"/></svg>
<div style="left:1656px;top:1002px;height:16px;line-height:16px;font-size:12px;color:#fff;letter-spacing:0.4px;"><span style="color:#F2D070">2</span> F...</div>
<svg style="position:absolute;left:1695px;top:1007px;" width="10" height="6" viewBox="0 0 10 6"><path d="M0 0 H10 L5 5Z" fill="#fff"/></svg>
<div style="left:1712px;top:997px;width:82px;height:27px;background:linear-gradient(#4C92F8 0px,#3C84F4 3px,#3A80F2 20px,#3478EC 27px);border-radius:3px 3px 0 0;box-shadow:inset 1px 1px rgba(255,255,255,0.25),inset -1px 0 rgba(0,0,0,0.2);"></div>
<svg style="position:absolute;left:1721px;top:1002px;" width="16" height="16" viewBox="0 0 16 16"><rect x="1" y="1" width="7" height="8" fill="#2050D0"/><rect x="7" y="7" width="8" height="8" fill="#20C020"/><rect x="1" y="10" width="6" height="5" fill="#A0A0A0"/></svg>
<div style="left:1740px;top:1002.0px;height:16px;line-height:16px;font-size:12px;font-weight:normal;color:#fff;letter-spacing:0.4px;">Taip...</div>
<div style="left:1796px;top:997px;width:82px;height:27px;background:linear-gradient(#4C92F8 0px,#3C84F4 3px,#3A80F2 20px,#3478EC 27px);border-radius:3px 3px 0 0;box-shadow:inset 1px 1px rgba(255,255,255,0.25),inset -1px 0 rgba(0,0,0,0.2);"></div>
<svg style="position:absolute;left:1805px;top:1002px;" width="16" height="16" viewBox="0 0 16 16"><rect x="1" y="1" width="14" height="14" fill="#F6B840" stroke="#fff"/><circle cx="8" cy="8" r="4" fill="none" stroke="#C06010" stroke-width="2"/></svg>
<div style="left:1824px;top:1002.0px;height:16px;line-height:16px;font-size:12px;font-weight:normal;color:#fff;letter-spacing:0.4px;">Inbo...</div>
<div style="left:1879px;top:997px;width:82px;height:27px;background:linear-gradient(#4C92F8 0px,#3C84F4 3px,#3A80F2 20px,#3478EC 27px);border-radius:3px 3px 0 0;box-shadow:inset 1px 1px rgba(255,255,255,0.25),inset -1px 0 rgba(0,0,0,0.2);"></div>
<svg style="position:absolute;left:1888px;top:1002px;" width="16" height="16" viewBox="0 0 16 16"><circle cx="8" cy="9" r="6.5" fill="#E04030"/><circle cx="8" cy="9" r="4" fill="#F8D0C0"/><path d="M5 12 L12 4" stroke="#fff"/></svg>
<div style="left:1907px;top:1002.0px;height:16px;line-height:16px;font-size:12px;font-weight:normal;color:#fff;letter-spacing:0.4px;">Origi...</div>
<div style="left:1964px;top:997px;width:82px;height:27px;background:linear-gradient(#4C92F8 0px,#3C84F4 3px,#3A80F2 20px,#3478EC 27px);border-radius:3px 3px 0 0;box-shadow:inset 1px 1px rgba(255,255,255,0.25),inset -1px 0 rgba(0,0,0,0.2);"></div>
<svg style="position:absolute;left:1973px;top:1002px;" width="16" height="16" viewBox="0 0 16 16"><path d="M1 3 H6 L7 5 H15 V14 H1Z" fill="#F0D060" stroke="#A08020"/></svg>
<div style="left:1992px;top:1002px;height:16px;line-height:16px;font-size:12px;color:#fff;letter-spacing:0.4px;"><span style="color:#F2D070">4</span> W..</div>
<svg style="position:absolute;left:2031px;top:1007px;" width="10" height="6" viewBox="0 0 10 6"><path d="M0 0 H10 L5 5Z" fill="#fff"/></svg>
<div style="left:2048px;top:997px;width:82px;height:27px;background:linear-gradient(#4C92F8 0px,#3C84F4 3px,#3A80F2 20px,#3478EC 27px);border-radius:3px 3px 0 0;box-shadow:inset 1px 1px rgba(255,255,255,0.25),inset -1px 0 rgba(0,0,0,0.2);"></div>
<svg style="position:absolute;left:2057px;top:1002px;" width="16" height="16" viewBox="0 0 16 16"><rect x="1" y="1" width="14" height="14" fill="#fff"/><rect x="2" y="2" width="12" height="12" fill="#2A5CC8"/><text x="8" y="12" font-size="10" font-weight="bold" fill="#fff" text-anchor="middle" font-family="Liberation Serif">W</text></svg>
<div style="left:2076px;top:1002.0px;height:16px;line-height:16px;font-size:12px;font-weight:normal;color:#fff;letter-spacing:0.4px;">Taip...</div>
<div style="left:2132px;top:997px;width:82px;height:27px;background:linear-gradient(#4C92F8 0px,#3C84F4 3px,#3A80F2 20px,#3478EC 27px);border-radius:3px 3px 0 0;box-shadow:inset 1px 1px rgba(255,255,255,0.25),inset -1px 0 rgba(0,0,0,0.2);"></div>
<svg style="position:absolute;left:2141px;top:1002px;" width="16" height="16" viewBox="0 0 16 16"><rect x="0" y="1" width="16" height="14" fill="#fff" stroke="#404040"/><path d="M2 3 L5 13 L8 3" stroke="#E02828" stroke-width="2" fill="none"/><path d="M10 8 V4 H14 V8 M14 10 H10 V13 H14" stroke="#1858D8" stroke-width="1.5" fill="none"/></svg>
<div style="left:2160px;top:1002.0px;height:16px;line-height:16px;font-size:12px;font-weight:normal;color:#fff;letter-spacing:0.4px;">DAS...</div>
<div style="left:2216px;top:997px;width:82px;height:27px;background:linear-gradient(#4C92F8 0px,#3C84F4 3px,#3A80F2 20px,#3478EC 27px);border-radius:3px 3px 0 0;box-shadow:inset 1px 1px rgba(255,255,255,0.25),inset -1px 0 rgba(0,0,0,0.2);"></div>
<svg style="position:absolute;left:2225px;top:1002px;" width="16" height="16" viewBox="0 0 16 16"><path d="M3 2 L12 1 L14 14 L4 15Z" fill="#A0D8F0" stroke="#5080A0"/></svg>
<div style="left:2244px;top:1002.0px;height:16px;line-height:16px;font-size:12px;font-weight:normal;color:#fff;letter-spacing:0.4px;">LogF...</div>
<div style="left:2300px;top:997px;width:82px;height:27px;background:linear-gradient(#4C92F8 0px,#3C84F4 3px,#3A80F2 20px,#3478EC 27px);border-radius:3px 3px 0 0;box-shadow:inset 1px 1px rgba(255,255,255,0.25),inset -1px 0 rgba(0,0,0,0.2);"></div>
<svg style="position:absolute;left:2309px;top:1002px;" width="16" height="16" viewBox="0 0 16 16"><rect x="0" y="0" width="16" height="16" fill="#000"/><path d="M2 14 L14 2" stroke="#F04040" stroke-width="1.5" stroke-dasharray="2 1"/></svg>
<div style="left:2328px;top:1002.0px;height:16px;line-height:16px;font-size:12px;font-weight:normal;color:#fff;letter-spacing:0.4px;">SPIC...</div>
<div style="left:2402px;top:994px;width:158px;height:30px;background:linear-gradient(#1090EC 0px,#18A6F6 2px,#12A0F2 6px,#0E96EE 26px,#0C8AE0 30px);border-left:1px solid #0C3E9C;"></div>
<div style="left:2392px;top:1000px;width:20px;height:20px;border-radius:50%;background:radial-gradient(circle at 40% 35%,#8CC8F8,#2A78D8 70%);border:1px solid #1A4A9A;"></div>
<svg style="position:absolute;left:2396px;top:1004px;" width="12" height="12" viewBox="0 0 12 12"><path d="M8 2 L4 6 L8 10" stroke="#fff" stroke-width="2.2" fill="none"/></svg>
<svg style="position:absolute;left:2413px;top:1001px;" width="15" height="16" viewBox="0 0 15 16"><rect x="1" y="1" width="13" height="14" fill="#F6B840" stroke="#FCE090"/><circle cx="7.5" cy="8" r="3.5" fill="none" stroke="#C06010" stroke-width="2"/></svg>
<svg style="position:absolute;left:2431px;top:1001px;" width="16" height="16" viewBox="0 0 16 16"><circle cx="10" cy="6" r="5" fill="#E0E8F8" stroke="#A0B8E0"/><path d="M6 10 L1 15" stroke="#2040A0" stroke-width="2"/></svg>
<svg style="position:absolute;left:2449px;top:1001px;" width="18" height="18" viewBox="0 0 18 18"><rect x="1" y="2" width="10" height="8" fill="#20D020"/><rect x="6" y="5" width="10" height="6" fill="#30C830"/><circle cx="12" cy="14" r="4" fill="#1030A0"/><ellipse cx="5" cy="15" rx="3" ry="2" fill="#F0C0C0"/></svg>
<svg style="position:absolute;left:2468px;top:1001px;" width="16" height="16" viewBox="0 0 16 16"><rect x="1" y="1" width="14" height="14" fill="#D81030"/><path d="M4 12 Q6 4 12 3" stroke="#fff" stroke-width="1.2" fill="none"/></svg>
<div style="left:2495px;top:1002.0px;height:16px;line-height:16px;font-size:12.5px;font-weight:normal;color:#fff;letter-spacing:0.2px;">3:43 PM</div>
<div style="left:1257px;top:34px;width:18px;height:985px;background:#FDFDFB;"></div>
<div style="left:1258px;top:35px;width:17px;height:17px;background:linear-gradient(90deg,#CAD6FA,#B9CAF8);border:1px solid #fff;border-radius:2px;"></div>
<svg style="position:absolute;left:1261px;top:38px;" width="11" height="10" viewBox="0 0 11 10"><path d="M1 7 L5.5 3 L10 7" stroke="#4D6185" stroke-width="2" fill="none"/></svg>
<div style="left:1258px;top:53px;width:17px;height:875px;background:linear-gradient(90deg,#C4D3FB,#B8CBFA 50%,#C6D4FB);border:1px solid #fff;border-radius:2px;"></div>
<div style="left:1258px;top:982px;width:17px;height:17px;background:linear-gradient(90deg,#CAD6FA,#B9CAF8);border:1px solid #fff;border-radius:2px;"></div>
<svg style="position:absolute;left:1261px;top:986px;" width="11" height="10" viewBox="0 0 11 10"><path d="M1 3 L5.5 7 L10 3" stroke="#4D6185" stroke-width="2" fill="none"/></svg>
<div style="left:4px;top:1000px;width:1253px;height:19px;background:linear-gradient(#F3F1EC,#FEFEFA);"></div>
<div style="left:4px;top:1001px;width:18px;height:18px;background:linear-gradient(#CAD6FA,#B9CAF8);border:1px solid #fff;border-radius:2px;"></div>
<svg style="position:absolute;left:7px;top:1004px;" width="11" height="11" viewBox="0 0 11 11"><path d="M7 1 L3 5.5 L7 10" stroke="#4D6185" stroke-width="2" fill="none"/></svg>
<div style="left:22px;top:1002px;width:595px;height:17px;background:linear-gradient(#C7D6FC,#B5C8F7);border:1px solid #fff;border-radius:3px;"></div>
<div style="left:316px;top:1006px;width:6px;height:8px;border-left:1px solid #E8EEFF;border-right:1px solid #E8EEFF;"></div>
<div style="left:1239px;top:1001px;width:17px;height:18px;background:linear-gradient(#CAD6FA,#B9CAF8);border:1px solid #fff;border-radius:2px;"></div>
<svg style="position:absolute;left:1242px;top:1004px;" width="11" height="11" viewBox="0 0 11 11"><path d="M3 1 L7 5.5 L3 10" stroke="#4D6185" stroke-width="2" fill="none"/></svg>
<div style="left:1257px;top:1000px;width:18px;height:19px;background:#F0EEE6;"></div>
<div style="left:1272px;top:1008px;width:2px;height:2px;background:#C8C0A8;"></div>
<div style="left:1269px;top:1011px;width:2px;height:2px;background:#C8C0A8;"></div>
<div style="left:1272px;top:1011px;width:2px;height:2px;background:#C8C0A8;"></div>
<div style="left:1266px;top:1014px;width:2px;height:2px;background:#C8C0A8;"></div>
<div style="left:1269px;top:1014px;width:2px;height:2px;background:#C8C0A8;"></div>
<div style="left:1272px;top:1014px;width:2px;height:2px;background:#C8C0A8;"></div>
<div style="left:1262px;top:488px;width:7px;height:1px;background:#8CA4E0;"></div>
<div style="left:1262px;top:490px;width:7px;height:1px;background:#8CA4E0;"></div>
<div style="left:1262px;top:492px;width:7px;height:1px;background:#8CA4E0;"></div>
<div style="left:1262px;top:494px;width:7px;height:1px;background:#8CA4E0;"></div>
</body></html>
